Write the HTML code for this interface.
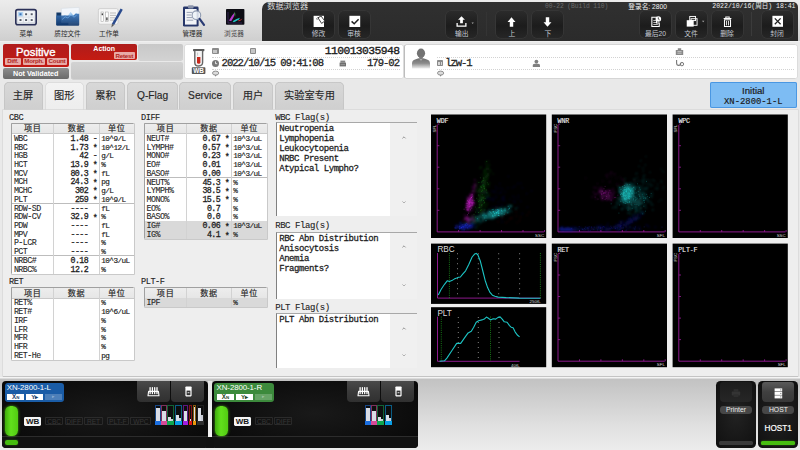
<!DOCTYPE html>
<html lang="zh"><head><meta charset="utf-8"><title>数据浏览器</title>
<style>
html,body{margin:0;padding:0;width:800px;height:450px;overflow:hidden}
body{width:800px;height:450px;overflow:hidden;position:relative;background:#e9e9e9;font-family:"Liberation Sans","Noto Sans CJK SC",sans-serif;color:#222}
#root{position:absolute;left:0;top:0;width:800px;height:450px;overflow:hidden;background:#e9e9e9}
#in{position:absolute;left:0;top:0;width:800px;height:450px}
.a{position:absolute;white-space:nowrap}
.m{font-family:"Liberation Mono","Noto Sans CJK SC",monospace}
.c{text-align:center}
.r{text-align:right}
.tb{position:absolute;top:-12px;height:53.5px;left:-12px;width:824px;background:linear-gradient(#ececec,#ececec 12px,#e2e2e2 28px,#cecece)}
.tl{position:absolute;top:30px;height:8px;line-height:8px;font-size:6.6px;color:#2a2a2a;text-align:center;width:40px}
.dk{position:absolute;left:262px;top:1.5px;width:535.9px;height:39.6px;background:linear-gradient(#303030,#2b2b2b);border-radius:7px 5px 0 0}
.db{position:absolute;top:10.5px;width:31px;height:27.4px;border-radius:5px;background:linear-gradient(#2b2b2b,#1c1c1c 55%,#262626);box-shadow:0 0 0 0.6px #3c3c3c}
.db span{position:absolute;left:-5px;right:-5px;top:19.2px;height:8px;line-height:8px;font-size:6.8px;color:#c3c9d2;text-align:center}
.db svg{position:absolute;left:0;top:0}
.wp{position:absolute;top:44.5px;height:33.6px;background:#fff;border-radius:1.5px;box-shadow:0 0 0 0.6px #d4d4d4}
.dot{position:absolute;height:0;border-top:1px dotted #d2d2d2}
.tab{position:absolute;top:82.3px;height:27.5px;border-radius:5px 5px 0 0;background:linear-gradient(#d8d8d8,#cfcfcf);box-shadow:inset 0 0 0 0.7px #c2c2c2;font-size:10.2px;line-height:28.6px;text-align:center;color:#262626;-webkit-text-stroke:0.15px #262626}
.tab.on{background:linear-gradient(#f3f3f3,#ededed);box-shadow:inset 0 0 0 0.7px #d6d6d6;height:28.5px}
.th{font-size:8.1px;color:#2a2a2a;letter-spacing:0.7px;-webkit-text-stroke:0.2px #2a2a2a}
.tn{font-size:8.3px;letter-spacing:-0.5px;color:#262626;-webkit-text-stroke:0.1px #262626}
.td{font-size:8.3px;letter-spacing:-0.5px;color:#1c1c1c;-webkit-text-stroke:0.28px #1c1c1c;white-space:pre}
.tu{font-size:7.7px;letter-spacing:-0.55px;color:#1c1c1c;-webkit-text-stroke:0.16px #1c1c1c}
.lb{font-size:8.6px;letter-spacing:-0.45px;color:#222;-webkit-text-stroke:0.12px #222}
.fl{font-size:9px;letter-spacing:-0.44px;color:#222;-webkit-text-stroke:0.1px #222}
.fi{font-size:9px;letter-spacing:-0.45px;color:#1c1c1c;-webkit-text-stroke:0.26px #1c1c1c}
.as{position:relative;top:1.4px}
</style></head><body><div id="root"><div id="in">

<div class="tb"></div>
<div class="a" style="left:0;top:41.3px;width:800px;height:1px;background:#efefef"></div>
<svg class="a" style="left:13px;top:5px" width="26" height="24" viewBox="0 0 26 24">
<defs><linearGradient id="mg" x1="0" y1="0" x2="0" y2="1"><stop offset="0" stop-color="#eef1f5"/><stop offset="1" stop-color="#cfd4dc"/></linearGradient>
<linearGradient id="fg" x1="0" y1="0" x2="0" y2="1"><stop offset="0" stop-color="#3a74b8"/><stop offset="1" stop-color="#0e3468"/></linearGradient></defs>
<rect x="2.8" y="4.6" width="20.4" height="15.2" rx="2" fill="url(#mg)" stroke="#2b3158" stroke-width="1.6"/>
<rect x="5.2" y="7" width="4.6" height="4.4" fill="#a9d0f2"/><rect x="10.8" y="7" width="4.6" height="4.4" fill="#f4f6f8"/><rect x="16.4" y="7" width="4.6" height="4.4" fill="#f4f6f8"/>
<rect x="5.2" y="12.8" width="4.6" height="4.4" fill="#f4f6f8"/><rect x="10.8" y="12.8" width="4.6" height="4.4" fill="#f4f6f8"/><rect x="16.4" y="12.8" width="4.6" height="4.4" fill="#f4f6f8"/>
<rect x="6.5" y="8.3" width="2" height="1.9" fill="#3b6fb4"/><rect x="12.1" y="8.3" width="2" height="1.9" fill="#555b68"/><rect x="17.7" y="8.3" width="2" height="1.9" fill="#555b68"/>
<rect x="6.5" y="14.1" width="2" height="1.9" fill="#555b68"/><rect x="12.1" y="14.1" width="2" height="1.9" fill="#555b68"/><rect x="17.7" y="14.1" width="2" height="1.9" fill="#555b68"/>
</svg>
<div class="tl" style="left:6px">菜单</div>
<svg class="a" style="left:54px;top:5px" width="28" height="24" viewBox="0 0 28 24">
<path d="M2.4 7.4h5.6l1.4 1.6h5v11h-12z" fill="#123866"/>
<path d="M7.4 3.4l17.8-1v15h-17.8z" fill="#f2f6fb" stroke="#d3dae3" stroke-width="0.5"/>
<path d="M7.6 12.6l3.2-2.6 2.6 1.2 3.2-4.2 3 3.2 2.6-2.4 2.8 2.6v6.6h-17.4z" fill="#8fc0ec" opacity="0.75"/>
<path d="M2.2 10.6h17.6l1.8-1.8h3.6v11q0 1-1 1h-21q-1 0-1-1z" fill="url(#fg)" opacity="0.9"/>
<path d="M8 14.6l3.2-2.8 2.6 1.2 3.2-3.4 3 2.6 2.6-2" fill="none" stroke="#6fa8e2" stroke-width="0.9" opacity="0.85"/>
</svg>
<div class="tl" style="left:47.5px">质控文件</div>
<svg class="a" style="left:96px;top:5px" width="30" height="26" viewBox="0 0 30 26">
<rect x="2.4" y="3.6" width="19.6" height="15.6" rx="1.6" fill="#f6f6f6" stroke="#c9c9c9" stroke-width="0.8"/>
<rect x="5" y="7" width="2.6" height="9.6" fill="#fff" stroke="#9a9a9a" stroke-width="0.5"/><rect x="5.6" y="8.4" width="1.4" height="1.8" fill="#444"/>
<rect x="9.6" y="7" width="2.6" height="9.6" fill="#fff" stroke="#9a9a9a" stroke-width="0.5"/><rect x="10.2" y="12.4" width="1.4" height="3" fill="#444"/>
<path d="M14 8h6M14 10.4h6M14 12.8h5M14 15.2h4" stroke="#b5b5b5" stroke-width="0.9"/>
<path d="M24.6 3.4l2.2 1.3-8.7 15.3-2.2-1.3z" fill="#2a4b8e"/><path d="M15.9 18.7l2.2 1.3-2.7 2.4z" fill="#5a5a5a"/>
</svg>
<div class="tl" style="left:89px">工作单</div>
<svg class="a" style="left:180px;top:3px" width="28" height="28" viewBox="0 0 28 28">
<rect x="3" y="3.6" width="15.6" height="20" rx="1.4" fill="#27376a"/>
<rect x="5" y="6" width="11.6" height="15.6" fill="#f2f4f7"/>
<rect x="8" y="2.2" width="5.6" height="3.2" rx="0.8" fill="#8a93aa"/>
<path d="M6.6 9.4h6M6.6 12h4.6M6.6 14.6h5.6M6.6 17.2h6.6" stroke="#9aa3b4" stroke-width="1"/>
<circle cx="16.4" cy="12.2" r="4.3" fill="#eef3f8" fill-opacity="0.85" stroke="#8f9bb0" stroke-width="1.1"/>
<path d="M19.6 15.8l4.4 6" stroke="#2a3c74" stroke-width="2.2" stroke-linecap="round"/>
</svg>
<div class="tl" style="left:172.4px">管理器</div>
<svg class="a" style="left:224px;top:7px" width="22" height="20" viewBox="0 0 22 20">
<rect x="2" y="2" width="18.4" height="15.8" rx="0.8" fill="#0d0d14"/>
<path d="M5 13.6q3-5.6 5.6-8.2q.6 2.6-3.4 8.8z" fill="#c23ad6" opacity="0.95"/>
<path d="M8.6 14.2q4-2.8 7.4-3.4q-1.6 3-6.2 4.4z" fill="#22c7c7"/>
<path d="M10.6 4.6q1.2 2 .4 5.4q-1-2.4-.4-5.4z" fill="#38b838"/>
<path d="M14 13.6q2.4-.6 4.4-2.2q-.8 2.2-3.6 3z" fill="#d23a3a" opacity="0.9"/>
<path d="M4 5v11h14" stroke="#5a3a8a" stroke-width="0.5" fill="none"/>
</svg>
<div class="tl" style="left:214px;color:#444">浏览器</div>
<div class="dk"></div>
<div class="a" style="left:267.2px;top:2px;height:9px;line-height:9px;font-size:8.2px;color:#dadada;letter-spacing:0">数据浏览器</div>
<div class="a m" style="left:545px;top:2.9px;height:8px;line-height:8px;font-size:6.3px;color:#6a6a6a;letter-spacing:-0.06px">00-22 (Build 110)</div>
<div class="a" style="left:628.3px;top:2.7px;height:8px;line-height:8px;font-size:6.7px;color:#f2f2f2">登录名: 2800</div>
<div class="a m" style="left:712.3px;top:2.9px;height:8px;line-height:8px;font-size:6.5px;color:#ececec;letter-spacing:0px">2022/10/16(周日) 18:41</div>
<div class="db" style="left:303.1px"><svg width="31" height="20" viewBox="0 0 31 20"><g transform="translate(0 0.2)"><rect x="10.6" y="4.6" width="10.4" height="11.2" fill="#fff"/><path d="M15 6.6l3-1.8 3.8 5-3.2 2.4z" fill="#fff" stroke="#2a2a2a" stroke-width="0.9"/><path d="M14.2 8.6q-1-1.6.6-2.4" fill="none" stroke="#2a2a2a" stroke-width="0.7"/></g></svg><span>修改</span></div>
<div class="db" style="left:338.6px"><svg width="31" height="20" viewBox="0 0 31 20"><g transform="translate(0 0.2)"><rect x="10.4" y="4.6" width="10.8" height="11.2" fill="#fff"/><path d="M12.6 10.2l2.6 2.4 4.4-4.6" fill="none" stroke="#222" stroke-width="1.5"/></g></svg><span>审核</span></div>
<div class="db" style="left:446.3px"><svg width="31" height="20" viewBox="0 0 31 20"><g transform="translate(15.5 15.7) scale(0.86) translate(-15.5 -15.8)"><path d="M15.5 3.6l4 4.2h-2.4v4h-3.2v-4h-2.4z" fill="#fff"/><path d="M10.4 11.4v3.8h10.2v-3.8" fill="none" stroke="#fff" stroke-width="1.5"/><path d="M27.2 11h2.6l-1.3 1.7z" fill="#aaa"/></g></svg><span>输出</span></div>
<div class="db" style="left:496.4px"><svg width="31" height="20" viewBox="0 0 31 20"><g transform="translate(15.5 15.8) scale(0.86) translate(-15.5 -14.8)"><path d="M15.5 3.8l4.6 5.4h-2.6v5.6h-4v-5.6h-2.6z" fill="#fff"/></g></svg><span>上</span></div>
<div class="db" style="left:532.3px"><svg width="31" height="20" viewBox="0 0 31 20"><g transform="translate(15.5 15.8) scale(0.86) translate(-15.5 -15.6)"><path d="M15.5 15.6l4.6-5.4h-2.6v-5.8h-4v5.8h-2.6z" fill="#fff"/></g></svg><span>下</span></div>
<div class="db" style="left:640px"><svg width="31" height="20" viewBox="0 0 31 20"><g transform="translate(16 15.5) scale(0.9) translate(-16 -15.6)"><path d="M11.4 5.4h5.2v6.4h3v3.8h-8.2z" fill="none" stroke="#fff" stroke-width="1.2"/><path d="M13 9h3M13 11.2h3M13 13.4h5" stroke="#fff" stroke-width="0.8"/><circle cx="18.6" cy="7.2" r="3.1" fill="#fff"/><path d="M18.6 5.4v2l1.4.8" stroke="#222" stroke-width="0.8" fill="none"/></g></svg><span>最后20</span></div>
<div class="db" style="left:675.6px"><svg width="31" height="20" viewBox="0 0 31 20"><g transform="translate(15.9 15.6) scale(0.94) translate(-15.9 -14.8)"><rect x="13.6" y="4" width="6.2" height="4.4" fill="none" stroke="#fff" stroke-width="1"/><rect x="10.4" y="8" width="7.4" height="6.8" fill="#fff"/><rect x="15" y="6.4" width="6.4" height="7" fill="none" stroke="#fff" stroke-width="1"/><path d="M26.6 8.6h2.6l-1.3 1.7z" fill="#aaa"/></g></svg><span>文件</span></div>
<div class="db" style="left:711.6px"><svg width="31" height="20" viewBox="0 0 31 20"><g transform="translate(15.5 15.4) scale(0.84) translate(-15.6 -15.6)"><path d="M11 6.2h9.2M13.6 6v-1.6h4v1.6" stroke="#fff" stroke-width="1.2" fill="none"/><path d="M12 7.6h7.2v8h-7.2z" fill="none" stroke="#fff" stroke-width="1.2"/><path d="M14.4 9v5.4M16.8 9v5.4" stroke="#fff" stroke-width="1"/></g></svg><span>删除</span></div>
<div class="db" style="left:761.6px"><svg width="31" height="20" viewBox="0 0 31 20"><g transform="translate(0 0.2)"><rect x="10.4" y="4.6" width="10.6" height="11" fill="#fff"/><path d="M12.8 7.2l5.8 5.8M18.6 7.2l-5.8 5.8" stroke="#222" stroke-width="1.3"/></g></svg><span>封闭</span></div>
<div class="a" style="left:751.4px;top:12px;width:0.8px;height:24px;background:#3b3b3b"></div>
<div class="a" style="left:486.4px;top:12px;width:0.8px;height:24px;background:#343434"></div>
<div class="a" style="left:2.5px;top:44px;width:66.5px;height:23.2px;border-radius:2px;background:linear-gradient(#b01c1c,#c21a14)"></div>
<div class="a c" style="left:2.5px;top:45px;width:66.5px;height:12px;line-height:12px;font-size:11.3px;color:#fff;transform:translateY(0.5px);-webkit-text-stroke:0.4px #fff">Positive</div>
<div class="a c" style="left:5px;top:58.3px;width:15.6px;height:6.4px;line-height:6.8px;font-size:6.2px;font-weight:bold;letter-spacing:-0.2px;border-radius:1px;background:#e8aaa6;color:#b02420">Diff.</div>
<div class="a c" style="left:23px;top:58.3px;width:21.8px;height:6.4px;line-height:6.8px;font-size:6.2px;font-weight:bold;letter-spacing:-0.2px;border-radius:1px;background:#e8aaa6;color:#b02420">Morph.</div>
<div class="a c" style="left:47px;top:58.3px;width:20px;height:6.4px;line-height:6.8px;font-size:6.2px;font-weight:bold;letter-spacing:-0.2px;border-radius:1px;background:#e8aaa6;color:#b02420">Count</div>
<div class="a c" style="left:2.5px;top:68.4px;width:66.5px;height:10.3px;line-height:12.2px;border-radius:2px;background:linear-gradient(#8d8d8d,#6a6a6a);font-size:7.2px;font-weight:bold;color:#fff">Not Validated</div>
<div class="a" style="left:71.3px;top:44px;width:65.3px;height:16.3px;border-radius:2px;background:linear-gradient(#ae1d1b,#c51b12)"></div>
<div class="a c" style="left:71.3px;top:45px;width:65.9px;height:8px;line-height:8px;font-size:7px;font-weight:bold;color:#fff">Action</div>
<div class="a c" style="left:113.6px;top:52.2px;width:21.4px;height:6.6px;line-height:7px;font-size:6.2px;font-weight:bold;letter-spacing:-0.2px;border-radius:1px;background:#e8aaa6;color:#b02420">Retest</div>
<div class="a" style="left:138.2px;top:44.2px;width:44.4px;height:16px;border-radius:2px;background:linear-gradient(#c8c8c8,#d2d2d2);box-shadow:0 0.6px 0 #bcbcbc"></div>
<div class="a" style="left:71.3px;top:61.8px;width:111.3px;height:16.8px;border-radius:2px;background:linear-gradient(#d2d2d2,#c6c6c6);box-shadow:0 0.6px 0 #bcbcbc"></div>
<div class="wp" style="left:185.2px;width:217.8px"></div>
<div class="wp" style="left:405.2px;width:392px;box-shadow:-0.8px 0 0 0.2px #bdbdbd,0 0 0 0.6px #d4d4d4"></div>
<svg class="a" style="left:190px;top:47px" width="18" height="29" viewBox="0 0 18 29">
<rect x="3" y="2" width="11.4" height="2.2" rx="0.6" fill="#5c5c5c"/>
<path d="M4.8 4v11.4q0 3.6 3.9 3.6t3.9-3.6v-11.4" fill="#f4f4f4" stroke="#666" stroke-width="1.4"/>
<path d="M7 10h3.4v5.2q0 1.6-1.7 1.6t-1.7-1.6z" fill="#c8281c"/>
<path d="M7.6 5.6v3" stroke="#aaa" stroke-width="0.6"/>
<rect x="1.8" y="20.2" width="13.6" height="6.8" rx="0.8" fill="#585858"/>
<text x="8.6" y="25.9" font-family="Liberation Sans,sans-serif" font-weight="bold" font-size="6.4" fill="#fff" text-anchor="middle">WB</text>
</svg>
<div class="a" style="left:212px;top:48px;width:6.8px;height:6.4px;border-radius:1px;background:#8b8b8b"></div><div class="a" style="left:213.3px;top:49.6px;width:4.2px;height:3px;background:#d9d9d9;opacity:.75"></div>
<div class="a" style="left:249.5px;top:48px;width:6.8px;height:6.4px;border-radius:1px;background:#8b8b8b"></div><div class="a" style="left:250.8px;top:49.4px;width:4.2px;height:3.4px;background:#d9d9d9;opacity:.75"></div>
<div class="dot" style="left:212px;top:56.8px;width:188px"></div>
<div class="dot" style="left:212px;top:68.6px;width:188px"></div>
<svg class="a" style="left:211px;top:58.6px" width="9" height="9" viewBox="0 0 9 9"><circle cx="4.5" cy="4.5" r="3.5" fill="#777"/><path d="M4.5 2.4v2.3h1.7" stroke="#fff" stroke-width="0.8" fill="none"/></svg>
<svg class="a" style="left:211px;top:70.4px" width="9" height="8" viewBox="0 0 9 8"><path d="M3.4 4.6l1.2 2.2 1.2-2.2z" fill="#858585"/><ellipse cx="4.6" cy="3.1" rx="3.1" ry="2" fill="#dcdcdc" stroke="#858585" stroke-width="0.9"/></svg>
<div class="a m" style="left:221.6px;top:57.6px;height:11px;line-height:11px;font-size:10.6px;letter-spacing:-1.02px;color:#262626;-webkit-text-stroke:0.3px #262626">2022/10/15 09:41:08</div>
<div class="a m r" style="left:300px;width:99.4px;top:44.6px;height:12px;line-height:12px;font-size:11.4px;letter-spacing:-0.62px;color:#1e1e1e;-webkit-text-stroke:0.36px #1e1e1e">110013035948</div>
<div class="a m r" style="left:340px;width:59px;top:57.6px;height:11px;line-height:11px;font-size:10.6px;letter-spacing:-1.02px;color:#262626;-webkit-text-stroke:0.3px #262626">179-02</div>
<svg class="a" style="left:339.4px;top:60px" width="8" height="7" viewBox="0 0 8 7"><rect x="0.6" y="2.6" width="6.4" height="3.8" fill="#707070"/><rect x="1.4" y="0.6" width="4.8" height="2.2" fill="#858585"/><path d="M1.6 4.6h4.4" stroke="#bbb" stroke-width="0.5"/></svg>
<svg class="a" style="left:410px;top:46.6px" width="22" height="24" viewBox="0 0 22 24">
<defs><linearGradient id="pg" x1="0" y1="0" x2="0" y2="1"><stop offset="0" stop-color="#707070"/><stop offset="0.5" stop-color="#8c8c8c"/><stop offset="1" stop-color="#ececec"/></linearGradient></defs>
<ellipse cx="11" cy="6.2" rx="4.1" ry="4.7" fill="#727272"/>
<rect x="9.2" y="9.6" width="3.6" height="3" fill="#7a7a7a"/>
<path d="M2 21.4v-5q0-3.4 4.4-4.4l2.4-.8 2.2 2.4 2.2-2.4 2.4.8q4.4 1 4.4 4.4v5z" fill="url(#pg)"/>
</svg>
<div class="dot" style="left:437px;top:56.8px;width:357px"></div>
<div class="dot" style="left:437px;top:68.6px;width:357px"></div>
<div class="a" style="left:436.8px;top:59.9px;width:6.6px;height:6.6px;border-radius:0.8px;background:#8a8a8a"></div><div class="a" style="left:438.4px;top:61.5px;width:3.4px;height:3.4px;background:#d6d6d6"></div><div class="a" style="left:439.6px;top:61.5px;width:1px;height:3.4px;background:#8a8a8a"></div>
<div class="a m" style="left:445.3px;top:57.6px;height:11px;line-height:11px;font-size:10.6px;letter-spacing:-1.1px;color:#262626;-webkit-text-stroke:0.3px #262626">lzw-1</div>
<svg class="a" style="left:436px;top:70.4px" width="9" height="8" viewBox="0 0 9 8"><path d="M3.4 4.6l1.2 2.2 1.2-2.2z" fill="#858585"/><ellipse cx="4.6" cy="3.1" rx="3.1" ry="2" fill="#dcdcdc" stroke="#858585" stroke-width="0.9"/></svg>
<svg class="a" style="left:532px;top:59.4px" width="9" height="9" viewBox="0 0 9 9"><circle cx="4.4" cy="2.6" r="1.9" fill="#808080"/><path d="M0.8 8v-1.6q0-1.8 3.6-1.8t3.6 1.8v1.6z" fill="#808080"/></svg>
<svg class="a" style="left:675px;top:47.4px" width="9" height="9" viewBox="0 0 9 9"><path d="M0.8 8v-5h2v-1.8h3.4v1.8h2v5z" fill="#888"/><path d="M2.4 4.6h4.2M2.4 6.2h4.2" stroke="#ddd" stroke-width="0.7"/></svg>
<svg class="a" style="left:675px;top:59px" width="10" height="9" viewBox="0 0 10 9"><path d="M1.6 1v3q0 2.4 2.1 2.4t2.1-2.4" fill="none" stroke="#777" stroke-width="1.1"/><circle cx="6.9" cy="5.1" r="1.7" fill="none" stroke="#777" stroke-width="1"/></svg>
<div class="tab" style="left:3.5px;width:39px">主屏</div>
<div class="tab on" style="left:45px;width:38.6px">图形</div>
<div class="tab" style="left:86px;width:39px">累积</div>
<div class="tab" style="left:127.4px;width:50.4px">Q-Flag</div>
<div class="tab" style="left:179.2px;width:51.8px">Service</div>
<div class="tab" style="left:233px;width:39.8px">用户</div>
<div class="tab" style="left:274.6px;width:69.8px">实验室专用</div>
<div class="a" style="left:709.8px;top:82px;width:87px;height:25.8px;border-radius:2px;background:#7dbcf3;box-shadow:inset 0 0 0 1px #4a97e2"></div>
<div class="a c" style="left:709.8px;top:84.6px;width:87px;height:12px;line-height:12px;font-size:9.6px;color:#1a1a1a;-webkit-text-stroke:0.2px #1a1a1a">Initial</div>
<div class="a c m" style="left:709.8px;top:96.9px;width:87px;height:11px;line-height:11px;font-size:8.9px;color:#1a1a1a;-webkit-text-stroke:0.15px #1a1a1a">XN-2800-1-L</div>
<div class="a" style="left:2.6px;top:109.6px;width:795px;height:266.4px;background:#eeeeee;box-shadow:0 0 0 0.7px #d6d6d6"></div>
<div class="a" style="left:2.6px;top:376px;width:795px;height:0.8px;background:#c4c4c4"></div>
<div class="a m lb" style="left:9px;top:112.5px;height:11px;line-height:11px">CBC</div>
<div class="a m lb" style="left:141px;top:112.5px;height:11px;line-height:11px">DIFF</div>
<div class="a m lb" style="left:9px;top:276.7px;height:11px;line-height:11px">RET</div>
<div class="a m lb" style="left:141px;top:276.7px;height:11px;line-height:11px">PLT-F</div>
<div class="a" style="left:12.1px;top:123.6px;width:122.0px;height:150.00000000000003px;background:#fff;box-shadow:-0.8px -0.8px 0 0 #969696,0 0 0 0.7px #b9b9b9;overflow:hidden">
<div class="a" style="left:0;top:0;width:122.0px;height:9.700000000000017px;background:linear-gradient(#ededed,#e6e6e6);border-bottom:0.7px solid #c9c9c9"></div>
<div class="a c th" style="left:0px;width:41.3px;top:0.9px;height:9.700000000000017px;line-height:9.700000000000017px">项目</div>
<div class="a c th" style="left:41.3px;width:46.10000000000001px;top:0.9px;height:9.700000000000017px;line-height:9.700000000000017px">数据</div>
<div class="a c th" style="left:87.4px;width:34.599999999999994px;top:0.9px;height:9.700000000000017px;line-height:9.700000000000017px">单位</div>
<div class="a m tn" style="left:1.8px;top:11.45px;height:8.67px;line-height:8.67px">WBC</div>
<div class="a m td r" style="left:41.3px;width:43.9px;top:11.45px;height:8.67px;line-height:8.67px">1.48 -</div>
<div class="a m tu" style="left:89.1px;top:11.45px;height:8.67px;line-height:8.67px">10^9/L</div>
<div class="a m tn" style="left:1.8px;top:20.12px;height:8.67px;line-height:8.67px">RBC</div>
<div class="a m td r" style="left:41.3px;width:43.9px;top:20.12px;height:8.67px;line-height:8.67px">1.73 <span class="as">*</span></div>
<div class="a m tu" style="left:89.1px;top:20.12px;height:8.67px;line-height:8.67px">10^12/L</div>
<div class="a m tn" style="left:1.8px;top:28.79px;height:8.67px;line-height:8.67px">HGB</div>
<div class="a m td r" style="left:41.3px;width:43.9px;top:28.79px;height:8.67px;line-height:8.67px">42 -</div>
<div class="a m tu" style="left:89.1px;top:28.79px;height:8.67px;line-height:8.67px">g/L</div>
<div class="a m tn" style="left:1.8px;top:37.46px;height:8.67px;line-height:8.67px">HCT</div>
<div class="a m td r" style="left:41.3px;width:43.9px;top:37.46px;height:8.67px;line-height:8.67px">13.9 <span class="as">*</span></div>
<div class="a m tu" style="left:89.1px;top:37.46px;height:8.67px;line-height:8.67px">%</div>
<div class="a m tn" style="left:1.8px;top:46.13px;height:8.67px;line-height:8.67px">MCV</div>
<div class="a m td r" style="left:41.3px;width:43.9px;top:46.13px;height:8.67px;line-height:8.67px">80.3 <span class="as">*</span></div>
<div class="a m tu" style="left:89.1px;top:46.13px;height:8.67px;line-height:8.67px">fL</div>
<div class="a m tn" style="left:1.8px;top:54.80px;height:8.67px;line-height:8.67px">MCH</div>
<div class="a m td r" style="left:41.3px;width:43.9px;top:54.80px;height:8.67px;line-height:8.67px">24.3 <span class="as">*</span></div>
<div class="a m tu" style="left:89.1px;top:54.80px;height:8.67px;line-height:8.67px">pg</div>
<div class="a m tn" style="left:1.8px;top:63.47px;height:8.67px;line-height:8.67px">MCHC</div>
<div class="a m td r" style="left:41.3px;width:43.9px;top:63.47px;height:8.67px;line-height:8.67px">302 <span class="as">*</span></div>
<div class="a m tu" style="left:89.1px;top:63.47px;height:8.67px;line-height:8.67px">g/L</div>
<div class="a m tn" style="left:1.8px;top:72.14px;height:8.67px;line-height:8.67px">PLT</div>
<div class="a m td r" style="left:41.3px;width:43.9px;top:72.14px;height:8.67px;line-height:8.67px">259 <span class="as">*</span></div>
<div class="a m tu" style="left:89.1px;top:72.14px;height:8.67px;line-height:8.67px">10^9/L</div>
<div class="a" style="left:0;top:79.41px;width:122.0px;height:0.8px;background:#bdbdbd"></div>
<div class="a m tn" style="left:1.8px;top:81.16px;height:8.67px;line-height:8.67px">RDW-SD</div>
<div class="a m td r" style="left:41.3px;width:43.9px;top:81.16px;height:8.67px;line-height:8.67px">----  </div>
<div class="a m tu" style="left:89.1px;top:81.16px;height:8.67px;line-height:8.67px">fL</div>
<div class="a m tn" style="left:1.8px;top:89.83px;height:8.67px;line-height:8.67px">RDW-CV</div>
<div class="a m td r" style="left:41.3px;width:43.9px;top:89.83px;height:8.67px;line-height:8.67px">32.9 <span class="as">*</span></div>
<div class="a m tu" style="left:89.1px;top:89.83px;height:8.67px;line-height:8.67px">%</div>
<div class="a m tn" style="left:1.8px;top:98.50px;height:8.67px;line-height:8.67px">PDW</div>
<div class="a m td r" style="left:41.3px;width:43.9px;top:98.50px;height:8.67px;line-height:8.67px">----  </div>
<div class="a m tu" style="left:89.1px;top:98.50px;height:8.67px;line-height:8.67px">fL</div>
<div class="a m tn" style="left:1.8px;top:107.17px;height:8.67px;line-height:8.67px">MPV</div>
<div class="a m td r" style="left:41.3px;width:43.9px;top:107.17px;height:8.67px;line-height:8.67px">----  </div>
<div class="a m tu" style="left:89.1px;top:107.17px;height:8.67px;line-height:8.67px">fL</div>
<div class="a m tn" style="left:1.8px;top:115.84px;height:8.67px;line-height:8.67px">P-LCR</div>
<div class="a m td r" style="left:41.3px;width:43.9px;top:115.84px;height:8.67px;line-height:8.67px">----  </div>
<div class="a m tu" style="left:89.1px;top:115.84px;height:8.67px;line-height:8.67px">%</div>
<div class="a m tn" style="left:1.8px;top:124.51px;height:8.67px;line-height:8.67px">PCT</div>
<div class="a m td r" style="left:41.3px;width:43.9px;top:124.51px;height:8.67px;line-height:8.67px">----  </div>
<div class="a m tu" style="left:89.1px;top:124.51px;height:8.67px;line-height:8.67px">%</div>
<div class="a" style="left:0;top:131.78px;width:122.0px;height:0.8px;background:#bdbdbd"></div>
<div class="a m tn" style="left:1.8px;top:133.53px;height:8.67px;line-height:8.67px">NRBC#</div>
<div class="a m td r" style="left:41.3px;width:43.9px;top:133.53px;height:8.67px;line-height:8.67px">0.18  </div>
<div class="a m tu" style="left:89.1px;top:133.53px;height:8.67px;line-height:8.67px">10^3/uL</div>
<div class="a m tn" style="left:1.8px;top:142.20px;height:8.67px;line-height:8.67px">NRBC%</div>
<div class="a m td r" style="left:41.3px;width:43.9px;top:142.20px;height:8.67px;line-height:8.67px">12.2  </div>
<div class="a m tu" style="left:89.1px;top:142.20px;height:8.67px;line-height:8.67px">%</div>
<div class="a" style="left:40.9px;top:0;width:0.8px;height:150.00000000000003px;background:#d2d2d2"></div>
<div class="a" style="left:87.0px;top:0;width:0.8px;height:150.00000000000003px;background:#d2d2d2"></div>
</div>
<div class="a" style="left:144.8px;top:123.6px;width:122.19999999999999px;height:115.0px;background:#fff;box-shadow:-0.8px -0.8px 0 0 #969696,0 0 0 0.7px #b9b9b9;overflow:hidden">
<div class="a" style="left:0;top:0;width:122.19999999999999px;height:9.700000000000017px;background:linear-gradient(#ededed,#e6e6e6);border-bottom:0.7px solid #c9c9c9"></div>
<div class="a c th" style="left:0px;width:41.69999999999999px;top:0.9px;height:9.700000000000017px;line-height:9.700000000000017px">项目</div>
<div class="a c th" style="left:41.69999999999999px;width:45.0px;top:0.9px;height:9.700000000000017px;line-height:9.700000000000017px">数据</div>
<div class="a c th" style="left:86.69999999999999px;width:35.5px;top:0.9px;height:9.700000000000017px;line-height:9.700000000000017px">单位</div>
<div class="a m tn" style="left:1.8px;top:11.45px;height:8.67px;line-height:8.67px">NEUT#</div>
<div class="a m td r" style="left:41.69999999999999px;width:42.8px;top:11.45px;height:8.67px;line-height:8.67px">0.67 <span class="as">*</span></div>
<div class="a m tu" style="left:88.4px;top:11.45px;height:8.67px;line-height:8.67px">10^3/uL</div>
<div class="a m tn" style="left:1.8px;top:20.12px;height:8.67px;line-height:8.67px">LYMPH#</div>
<div class="a m td r" style="left:41.69999999999999px;width:42.8px;top:20.12px;height:8.67px;line-height:8.67px">0.57 <span class="as">*</span></div>
<div class="a m tu" style="left:88.4px;top:20.12px;height:8.67px;line-height:8.67px">10^3/uL</div>
<div class="a m tn" style="left:1.8px;top:28.79px;height:8.67px;line-height:8.67px">MONO#</div>
<div class="a m td r" style="left:41.69999999999999px;width:42.8px;top:28.79px;height:8.67px;line-height:8.67px">0.23 <span class="as">*</span></div>
<div class="a m tu" style="left:88.4px;top:28.79px;height:8.67px;line-height:8.67px">10^3/uL</div>
<div class="a m tn" style="left:1.8px;top:37.46px;height:8.67px;line-height:8.67px">EO#</div>
<div class="a m td r" style="left:41.69999999999999px;width:42.8px;top:37.46px;height:8.67px;line-height:8.67px">0.01  </div>
<div class="a m tu" style="left:88.4px;top:37.46px;height:8.67px;line-height:8.67px">10^3/uL</div>
<div class="a m tn" style="left:1.8px;top:46.13px;height:8.67px;line-height:8.67px">BASO#</div>
<div class="a m td r" style="left:41.69999999999999px;width:42.8px;top:46.13px;height:8.67px;line-height:8.67px">0.00  </div>
<div class="a m tu" style="left:88.4px;top:46.13px;height:8.67px;line-height:8.67px">10^3/uL</div>
<div class="a" style="left:0;top:53.40px;width:122.19999999999999px;height:0.8px;background:#bdbdbd"></div>
<div class="a m tn" style="left:1.8px;top:55.15px;height:8.67px;line-height:8.67px">NEUT%</div>
<div class="a m td r" style="left:41.69999999999999px;width:42.8px;top:55.15px;height:8.67px;line-height:8.67px">45.3 <span class="as">*</span></div>
<div class="a m tu" style="left:88.4px;top:55.15px;height:8.67px;line-height:8.67px">%</div>
<div class="a m tn" style="left:1.8px;top:63.82px;height:8.67px;line-height:8.67px">LYMPH%</div>
<div class="a m td r" style="left:41.69999999999999px;width:42.8px;top:63.82px;height:8.67px;line-height:8.67px">38.5 <span class="as">*</span></div>
<div class="a m tu" style="left:88.4px;top:63.82px;height:8.67px;line-height:8.67px">%</div>
<div class="a m tn" style="left:1.8px;top:72.49px;height:8.67px;line-height:8.67px">MONO%</div>
<div class="a m td r" style="left:41.69999999999999px;width:42.8px;top:72.49px;height:8.67px;line-height:8.67px">15.5 <span class="as">*</span></div>
<div class="a m tu" style="left:88.4px;top:72.49px;height:8.67px;line-height:8.67px">%</div>
<div class="a m tn" style="left:1.8px;top:81.16px;height:8.67px;line-height:8.67px">EO%</div>
<div class="a m td r" style="left:41.69999999999999px;width:42.8px;top:81.16px;height:8.67px;line-height:8.67px">0.7  </div>
<div class="a m tu" style="left:88.4px;top:81.16px;height:8.67px;line-height:8.67px">%</div>
<div class="a m tn" style="left:1.8px;top:89.83px;height:8.67px;line-height:8.67px">BASO%</div>
<div class="a m td r" style="left:41.69999999999999px;width:42.8px;top:89.83px;height:8.67px;line-height:8.67px">0.0  </div>
<div class="a m tu" style="left:88.4px;top:89.83px;height:8.67px;line-height:8.67px">%</div>
<div class="a" style="left:0;top:97.10px;width:122.19999999999999px;height:0.8px;background:#bdbdbd"></div>
<div class="a" style="left:0;top:97.55px;width:122.19999999999999px;height:9.07px;background:#d9d9d9"></div>
<div class="a m tn" style="left:1.8px;top:98.85px;height:8.67px;line-height:8.67px">IG#</div>
<div class="a m td r" style="left:41.69999999999999px;width:42.8px;top:98.85px;height:8.67px;line-height:8.67px">0.06 <span class="as">*</span></div>
<div class="a m tu" style="left:88.4px;top:98.85px;height:8.67px;line-height:8.67px">10^3/uL</div>
<div class="a" style="left:0;top:106.22px;width:122.19999999999999px;height:9.07px;background:#d9d9d9"></div>
<div class="a m tn" style="left:1.8px;top:107.52px;height:8.67px;line-height:8.67px">IG%</div>
<div class="a m td r" style="left:41.69999999999999px;width:42.8px;top:107.52px;height:8.67px;line-height:8.67px">4.1 <span class="as">*</span></div>
<div class="a m tu" style="left:88.4px;top:107.52px;height:8.67px;line-height:8.67px">%</div>
<div class="a" style="left:41.3px;top:0;width:0.8px;height:115.0px;background:#d2d2d2"></div>
<div class="a" style="left:86.3px;top:0;width:0.8px;height:115.0px;background:#d2d2d2"></div>
</div>
<div class="a" style="left:12.1px;top:287.8px;width:122.0px;height:72.0px;background:#fff;box-shadow:-0.8px -0.8px 0 0 #969696,0 0 0 0.7px #b9b9b9;overflow:hidden">
<div class="a" style="left:0;top:0;width:122.0px;height:9.899999999999977px;background:linear-gradient(#ededed,#e6e6e6);border-bottom:0.7px solid #c9c9c9"></div>
<div class="a c th" style="left:0px;width:41.3px;top:0.9px;height:9.899999999999977px;line-height:9.899999999999977px">项目</div>
<div class="a c th" style="left:41.3px;width:46.10000000000001px;top:0.9px;height:9.899999999999977px;line-height:9.899999999999977px">数据</div>
<div class="a c th" style="left:87.4px;width:34.599999999999994px;top:0.9px;height:9.899999999999977px;line-height:9.899999999999977px">单位</div>
<div class="a m tn" style="left:1.8px;top:11.65px;height:8.72px;line-height:8.72px">RET%</div>
<div class="a m tu" style="left:89.1px;top:11.65px;height:8.72px;line-height:8.72px">%</div>
<div class="a m tn" style="left:1.8px;top:20.37px;height:8.72px;line-height:8.72px">RET#</div>
<div class="a m tu" style="left:89.1px;top:20.37px;height:8.72px;line-height:8.72px">10^6/uL</div>
<div class="a m tn" style="left:1.8px;top:29.09px;height:8.72px;line-height:8.72px">IRF</div>
<div class="a m tu" style="left:89.1px;top:29.09px;height:8.72px;line-height:8.72px">%</div>
<div class="a m tn" style="left:1.8px;top:37.81px;height:8.72px;line-height:8.72px">LFR</div>
<div class="a m tu" style="left:89.1px;top:37.81px;height:8.72px;line-height:8.72px">%</div>
<div class="a m tn" style="left:1.8px;top:46.53px;height:8.72px;line-height:8.72px">MFR</div>
<div class="a m tu" style="left:89.1px;top:46.53px;height:8.72px;line-height:8.72px">%</div>
<div class="a m tn" style="left:1.8px;top:55.25px;height:8.72px;line-height:8.72px">HFR</div>
<div class="a m tu" style="left:89.1px;top:55.25px;height:8.72px;line-height:8.72px">%</div>
<div class="a m tn" style="left:1.8px;top:63.97px;height:8.72px;line-height:8.72px">RET-He</div>
<div class="a m tu" style="left:89.1px;top:63.97px;height:8.72px;line-height:8.72px">pg</div>
<div class="a" style="left:40.9px;top:0;width:0.8px;height:72.0px;background:#d2d2d2"></div>
<div class="a" style="left:87.0px;top:0;width:0.8px;height:72.0px;background:#d2d2d2"></div>
</div>
<div class="a" style="left:144.8px;top:287.8px;width:122.19999999999999px;height:18.80000000000001px;background:#fff;box-shadow:-0.8px -0.8px 0 0 #969696,0 0 0 0.7px #b9b9b9;overflow:hidden">
<div class="a" style="left:0;top:0;width:122.19999999999999px;height:9.899999999999977px;background:linear-gradient(#ededed,#e6e6e6);border-bottom:0.7px solid #c9c9c9"></div>
<div class="a c th" style="left:0px;width:41.69999999999999px;top:0.9px;height:9.899999999999977px;line-height:9.899999999999977px">项目</div>
<div class="a c th" style="left:41.69999999999999px;width:45.0px;top:0.9px;height:9.899999999999977px;line-height:9.899999999999977px">数据</div>
<div class="a c th" style="left:86.69999999999999px;width:35.5px;top:0.9px;height:9.899999999999977px;line-height:9.899999999999977px">单位</div>
<div class="a" style="left:0;top:10.35px;width:122.19999999999999px;height:9.0px;background:#d9d9d9"></div>
<div class="a m tn" style="left:1.8px;top:11.65px;height:8.6px;line-height:8.6px">IPF</div>
<div class="a m tu" style="left:88.4px;top:11.65px;height:8.6px;line-height:8.6px">%</div>
<div class="a" style="left:41.3px;top:0;width:0.8px;height:18.80000000000001px;background:#d2d2d2"></div>
<div class="a" style="left:86.3px;top:0;width:0.8px;height:18.80000000000001px;background:#d2d2d2"></div>
</div>
<div class="a m fl" style="left:275.2px;top:112.9px;height:11px;line-height:11px">WBC Flag(s)</div>
<div class="a" style="left:276px;top:122.3px;width:141.2px;height:93.5px;background:#f0f0f0;border-top:1px solid #a8a8a8;border-left:1px solid #808080;box-sizing:border-box;overflow:hidden">
<div class="a" style="left:0;top:0;width:113.4px;height:100%;background:#fff"></div>
<div class="a m fi" style="left:2.2px;top:0.80px;height:10px;line-height:10px">Neutropenia</div>
<div class="a m fi" style="left:2.2px;top:10.85px;height:10px;line-height:10px">Lymphopenia</div>
<div class="a m fi" style="left:2.2px;top:20.90px;height:10px;line-height:10px">Leukocytopenia</div>
<div class="a m fi" style="left:2.2px;top:30.95px;height:10px;line-height:10px">NRBC Present</div>
<div class="a m fi" style="left:2.2px;top:41.00px;height:10px;line-height:10px">Atypical Lympho?</div>
<svg class="a" style="left:124px;top:11.3px" width="6" height="5" viewBox="0 0 6 5"><path d="M1.4 3.4l1.6-1.6 1.6 1.6" fill="none" stroke="#8c8c8c" stroke-width="0.9"/></svg>
<svg class="a" style="left:124px;top:76.9px" width="6" height="5" viewBox="0 0 6 5"><path d="M1.4 1.4l1.6 1.6 1.6-1.6" fill="none" stroke="#a9a9a9" stroke-width="0.9"/></svg>
</div>
<div class="a m fl" style="left:275.2px;top:221.4px;height:11px;line-height:11px">RBC Flag(s)</div>
<div class="a" style="left:276px;top:231.8px;width:141.2px;height:67.2px;background:#f0f0f0;border-top:1px solid #a8a8a8;border-left:1px solid #808080;box-sizing:border-box;overflow:hidden">
<div class="a" style="left:0;top:0;width:113.4px;height:100%;background:#fff"></div>
<div class="a m fi" style="left:2.2px;top:0.80px;height:10px;line-height:10px">RBC Abn Distribution</div>
<div class="a m fi" style="left:2.2px;top:10.85px;height:10px;line-height:10px">Anisocytosis</div>
<div class="a m fi" style="left:2.2px;top:20.90px;height:10px;line-height:10px">Anemia</div>
<div class="a m fi" style="left:2.2px;top:30.95px;height:10px;line-height:10px">Fragments?</div>
<svg class="a" style="left:124px;top:11.4px" width="6" height="5" viewBox="0 0 6 5"><path d="M1.4 3.4l1.6-1.6 1.6 1.6" fill="none" stroke="#8c8c8c" stroke-width="0.9"/></svg>
<svg class="a" style="left:124px;top:50.2px" width="6" height="5" viewBox="0 0 6 5"><path d="M1.4 1.4l1.6 1.6 1.6-1.6" fill="none" stroke="#a9a9a9" stroke-width="0.9"/></svg>
</div>
<div class="a m fl" style="left:275.2px;top:303.3px;height:11px;line-height:11px">PLT Flag(s)</div>
<div class="a" style="left:276px;top:312.8px;width:141.2px;height:55.4px;background:#f0f0f0;border-top:1px solid #a8a8a8;border-left:1px solid #808080;box-sizing:border-box;overflow:hidden">
<div class="a" style="left:0;top:0;width:113.4px;height:100%;background:#fff"></div>
<div class="a m fi" style="left:2.2px;top:0.80px;height:10px;line-height:10px">PLT Abn Distribution</div>
<svg class="a" style="left:124px;top:12.0px" width="6" height="5" viewBox="0 0 6 5"><path d="M1.4 3.4l1.6-1.6 1.6 1.6" fill="none" stroke="#8c8c8c" stroke-width="0.9"/></svg>
<svg class="a" style="left:124px;top:39.0px" width="6" height="5" viewBox="0 0 6 5"><path d="M1.4 1.4l1.6 1.6 1.6-1.6" fill="none" stroke="#a9a9a9" stroke-width="0.9"/></svg>
</div>
<svg class="a" style="left:0;top:0" width="800" height="450" viewBox="0 0 800 450" font-family="Liberation Sans,sans-serif">
<rect x="431" y="114.5" width="115.2" height="123.5" fill="#000"/>
<rect x="551.8" y="114.5" width="115.2" height="123.5" fill="#000"/>
<rect x="672.6" y="114.5" width="115.2" height="123.5" fill="#000"/>
<rect x="431" y="243.6" width="115.2" height="60.3" fill="#000"/>
<rect x="431" y="307.2" width="115.2" height="60" fill="#000"/>
<rect x="551.8" y="243.6" width="115.2" height="123.6" fill="#000"/>
<rect x="672.6" y="243.6" width="115.2" height="123.6" fill="#000"/>
<text x="436.8" y="122.8" font-size="6.6" fill="#e8e8e8" font-family="Liberation Mono,monospace" letter-spacing="-0.1" stroke="#e8e8e8" stroke-width="0.15">WDF</text>
<text x="557.6" y="122.8" font-size="6.6" fill="#e8e8e8" font-family="Liberation Mono,monospace" letter-spacing="-0.1" stroke="#e8e8e8" stroke-width="0.15">WNR</text>
<text x="678.4" y="122.8" font-size="6.6" fill="#e8e8e8" font-family="Liberation Mono,monospace" letter-spacing="-0.1" stroke="#e8e8e8" stroke-width="0.15">WPC</text>
<text x="557.4" y="252" font-size="6.6" fill="#e8e8e8" font-family="Liberation Mono,monospace" letter-spacing="-0.1" stroke="#e8e8e8" stroke-width="0.15">RET</text>
<text x="678.2" y="252" font-size="6.6" fill="#e8e8e8" font-family="Liberation Mono,monospace" letter-spacing="-0.1" stroke="#e8e8e8" stroke-width="0.15">PLT-F</text>
<text x="437.4" y="252.3" font-size="8.2" fill="#dcdcdc">RBC</text>
<text x="437.4" y="315.6" font-size="8.2" fill="#dcdcdc">PLT</text>
<path d="M437.2 125.1V231.9H543.9" fill="none" stroke="#9c1c9c" stroke-width="0.9"/>
<path d="M437.2 210.3h2.2M437.2 188.8h2.2M437.2 167.2h2.2M437.2 145.7h2.2M437.2 124.1h2.2M458.6 231.9v-1.9M480.1 231.9v-1.9M501.5 231.9v-1.9M523.0 231.9v-1.9M544.5 231.9v-1.9" stroke="#9c1c9c" stroke-width="0.8" fill="none"/>
<text x="544.1" y="236.9" font-size="4.4" fill="#d8d8d8" text-anchor="end" font-family="Liberation Sans,sans-serif">SSC</text>
<text transform="translate(435.7 132.5) rotate(-90)" font-size="4.4" fill="#d8d8d8" font-family="Liberation Sans,sans-serif">SFL</text>
<path d="M558.0 125.1V231.9H664.7" fill="none" stroke="#9c1c9c" stroke-width="0.9"/>
<path d="M558.0 210.3h2.2M558.0 188.8h2.2M558.0 167.2h2.2M558.0 145.7h2.2M558.0 124.1h2.2M579.5 231.9v-1.9M600.9 231.9v-1.9M622.4 231.9v-1.9M643.8 231.9v-1.9M665.2 231.9v-1.9" stroke="#9c1c9c" stroke-width="0.8" fill="none"/>
<text x="664.9" y="236.9" font-size="4.4" fill="#d8d8d8" text-anchor="end" font-family="Liberation Sans,sans-serif">SFL</text>
<text transform="translate(556.5 132.5) rotate(-90)" font-size="4.4" fill="#d8d8d8" font-family="Liberation Sans,sans-serif">FSC</text>
<path d="M678.8 125.1V231.9H785.5" fill="none" stroke="#9c1c9c" stroke-width="0.9"/>
<path d="M678.8 210.3h2.2M678.8 188.8h2.2M678.8 167.2h2.2M678.8 145.7h2.2M678.8 124.1h2.2M700.3 231.9v-1.9M721.7 231.9v-1.9M743.2 231.9v-1.9M764.6 231.9v-1.9M786.1 231.9v-1.9" stroke="#9c1c9c" stroke-width="0.8" fill="none"/>
<text x="785.7" y="236.9" font-size="4.4" fill="#d8d8d8" text-anchor="end" font-family="Liberation Sans,sans-serif">SSC</text>
<text transform="translate(677.3 132.5) rotate(-90)" font-size="4.4" fill="#d8d8d8" font-family="Liberation Sans,sans-serif">SFL</text>
<path d="M558.0 254.2V361.2H664.7" fill="none" stroke="#9c1c9c" stroke-width="0.9"/>
<path d="M558.0 339.6h2.2M558.0 318.1h2.2M558.0 296.5h2.2M558.0 275.0h2.2M558.0 253.4h2.2M579.5 361.2v-1.9M600.9 361.2v-1.9M622.4 361.2v-1.9M643.8 361.2v-1.9M665.2 361.2v-1.9" stroke="#9c1c9c" stroke-width="0.8" fill="none"/>
<text x="664.9" y="366.2" font-size="4.4" fill="#d8d8d8" text-anchor="end" font-family="Liberation Sans,sans-serif">SFL</text>
<text transform="translate(556.5 261.6) rotate(-90)" font-size="4.4" fill="#d8d8d8" font-family="Liberation Sans,sans-serif">FSC</text>
<path d="M678.8 254.2V361.2H785.5" fill="none" stroke="#9c1c9c" stroke-width="0.9"/>
<path d="M678.8 339.6h2.2M678.8 318.1h2.2M678.8 296.5h2.2M678.8 275.0h2.2M678.8 253.4h2.2M700.3 361.2v-1.9M721.7 361.2v-1.9M743.2 361.2v-1.9M764.6 361.2v-1.9M786.1 361.2v-1.9" stroke="#9c1c9c" stroke-width="0.8" fill="none"/>
<text x="785.7" y="366.2" font-size="4.4" fill="#d8d8d8" text-anchor="end" font-family="Liberation Sans,sans-serif">SFL</text>
<text transform="translate(677.3 261.6) rotate(-90)" font-size="4.4" fill="#d8d8d8" font-family="Liberation Sans,sans-serif">FSC</text>
<defs><filter id="sb" x="-5%" y="-5%" width="110%" height="110%"><feGaussianBlur stdDeviation="0.85"/></filter></defs><g filter="url(#sb)">
<path d="M466.9 204.2h1.2M470.8 201.7h1.2M467.1 202.6h1.2M468.9 207.2h1.2M468.1 198.3h1.2M469.7 205.1h1.2M470.6 207.1h1.2M469.0 202.2h1.2M473.0 202.9h1.2M468.7 198.9h1.2M469.0 203.7h1.2M468.5 202.9h1.2M468.9 205.7h1.2M470.5 204.3h1.2M465.9 205.1h1.2M467.0 202.2h1.2M466.8 202.8h1.2M467.7 203.7h1.2M473.9 204.0h1.2M471.2 198.8h1.2M468.1 205.5h1.2M468.6 204.5h1.2M469.9 199.7h1.2M470.4 200.5h1.2M472.1 202.0h1.2M470.0 203.4h1.2M470.8 201.4h1.2M470.6 203.1h1.2M470.4 205.8h1.2M469.8 200.5h1.2M469.8 205.1h1.2M471.7 202.4h1.2M469.5 205.2h1.2M469.3 204.0h1.2M469.7 201.1h1.2M467.8 201.5h1.2M468.8 208.7h1.2M469.7 207.2h1.2M469.6 205.9h1.2M468.7 206.0h1.2M471.8 202.6h1.2M466.6 209.9h1.2M468.7 206.7h1.2M471.1 199.5h1.2M471.3 210.2h1.2M468.7 205.9h1.2M469.8 200.1h1.2M468.6 204.5h1.2M470.1 206.0h1.2M468.1 208.0h1.2M467.3 205.8h1.2M470.8 202.5h1.2M467.0 199.5h1.2M469.0 205.1h1.2M472.0 200.1h1.2M468.5 205.5h1.2M470.5 194.8h1.2M468.5 211.6h1.2M471.1 200.3h1.2M468.2 203.9h1.2M472.2 206.1h1.2M468.1 208.7h1.2M467.5 209.7h1.2M468.3 201.3h1.2M469.0 208.4h1.2M469.7 204.5h1.2M466.8 200.1h1.2M468.5 201.1h1.2M470.1 202.2h1.2M470.1 203.7h1.2M468.4 203.5h1.2M469.0 206.4h1.2M468.5 202.2h1.2M465.8 208.5h1.2M471.3 203.0h1.2M469.2 198.7h1.2M469.1 204.0h1.2M472.0 204.7h1.2M469.6 194.3h1.2M470.9 204.3h1.2M466.5 203.4h1.2M464.1 215.0h1.2M470.2 205.6h1.2M470.3 195.6h1.2M469.9 197.7h1.2M471.4 195.8h1.2M466.8 207.2h1.2M472.3 199.5h1.2M466.1 205.8h1.2M471.0 200.0h1.2M468.5 200.5h1.2M467.7 200.4h1.2M470.3 206.0h1.2M472.1 203.5h1.2M469.5 199.7h1.2M469.8 198.5h1.2M465.9 205.1h1.2M470.5 206.6h1.2M470.8 204.5h1.2M467.9 203.3h1.2M469.2 199.2h1.2M467.6 197.5h1.2M468.9 203.7h1.2M467.3 208.1h1.2M468.8 205.3h1.2M471.4 200.7h1.2M465.6 205.3h1.2M467.1 207.6h1.2M468.8 206.9h1.2M471.6 196.1h1.2M470.5 201.0h1.2M468.2 201.4h1.2M469.5 206.5h1.2M471.7 197.6h1.2M469.8 194.6h1.2M468.4 205.3h1.2M467.7 203.8h1.2M468.6 206.8h1.2M468.4 200.0h1.2M466.6 209.2h1.2M470.7 203.1h1.2M469.2 203.7h1.2M469.4 202.5h1.2M469.4 198.7h1.2M466.9 208.8h1.2M469.7 203.6h1.2M468.6 203.4h1.2M470.0 201.0h1.2M469.1 204.1h1.2M468.5 200.2h1.2M468.3 199.2h1.2M472.0 195.1h1.2M469.0 201.0h1.2M468.0 203.4h1.2M470.6 203.8h1.2M469.2 201.0h1.2M468.2 206.4h1.2M469.2 199.0h1.2M467.9 198.9h1.2M466.2 206.7h1.2M469.7 202.5h1.2M471.6 201.3h1.2M469.5 206.3h1.2M467.8 197.2h1.2M467.0 206.1h1.2M471.8 199.3h1.2M470.8 202.2h1.2M468.8 201.1h1.2M469.8 196.7h1.2M468.4 198.5h1.2M468.2 210.7h1.2M473.3 202.8h1.2M466.8 201.3h1.2M466.2 209.9h1.2M470.4 200.8h1.2M470.0 205.4h1.2M467.0 200.8h1.2M468.6 203.2h1.2M469.4 202.0h1.2M469.7 201.2h1.2M466.6 208.3h1.2M469.2 204.9h1.2M466.8 202.1h1.2M471.1 198.9h1.2M470.9 202.2h1.2M469.7 202.9h1.2M468.5 207.5h1.2M467.3 208.6h1.2M468.5 199.7h1.2M470.8 199.7h1.2M467.8 206.3h1.2M472.0 197.3h1.2M468.4 210.0h1.2M470.9 202.7h1.2M468.3 202.0h1.2M467.5 201.9h1.2M468.8 202.6h1.2M470.9 202.7h1.2M466.1 206.5h1.2M467.7 201.3h1.2M469.0 201.9h1.2M467.7 202.0h1.2M472.6 201.7h1.2M468.0 207.1h1.2M469.5 206.1h1.2M471.7 196.5h1.2M467.6 203.4h1.2M468.8 207.9h1.2M469.9 202.5h1.2M469.2 202.5h1.2" stroke="#d01cd0" stroke-width="1.2" stroke-opacity="0.62" fill="none"/>
<path d="M473.3 190.7h1.1M473.7 184.7h1.1M471.6 192.1h1.1M474.2 192.2h1.1M473.8 191.5h1.1M473.0 190.6h1.1M472.4 187.0h1.1M472.1 190.7h1.1M472.9 187.4h1.1M472.9 193.4h1.1M473.3 184.1h1.1M475.3 183.9h1.1M474.5 185.9h1.1M474.8 180.8h1.1M474.7 186.2h1.1M470.8 195.9h1.1M471.5 201.9h1.1M474.3 186.7h1.1M472.3 194.3h1.1M473.1 189.8h1.1M474.8 184.6h1.1M474.1 186.1h1.1M471.3 191.1h1.1M474.2 188.5h1.1M474.0 179.9h1.1M474.1 187.7h1.1M471.6 187.4h1.1M471.7 187.5h1.1M473.4 189.4h1.1M473.6 188.7h1.1" stroke="#b018b0" stroke-width="1.1" stroke-opacity="0.4" fill="none"/>
<path d="M464.6 219.0h1.2M466.3 219.2h1.2M468.3 220.6h1.2M471.9 215.5h1.2M468.6 219.3h1.2M473.5 221.1h1.2M463.3 220.2h1.2M466.2 221.2h1.2M464.9 219.4h1.2M467.3 219.4h1.2M466.1 216.7h1.2M468.8 221.2h1.2M467.4 218.0h1.2M468.1 220.5h1.2M467.1 219.6h1.2M471.3 217.8h1.2M466.1 216.6h1.2M465.8 218.4h1.2M465.1 218.5h1.2M472.3 219.3h1.2M467.3 223.1h1.2M467.4 216.8h1.2M468.6 218.1h1.2M471.9 217.6h1.2M466.1 217.0h1.2M467.9 218.0h1.2M467.4 219.0h1.2M466.0 221.1h1.2M470.0 219.7h1.2M465.3 217.9h1.2M468.3 223.4h1.2M466.4 218.3h1.2M465.8 217.8h1.2M465.1 219.3h1.2M471.3 219.6h1.2M466.3 217.0h1.2M468.2 219.6h1.2M464.4 217.9h1.2M467.5 221.2h1.2M469.2 219.9h1.2M466.8 220.1h1.2M467.6 223.1h1.2M464.7 219.0h1.2M470.9 219.2h1.2M471.3 219.5h1.2M468.0 219.0h1.2M464.0 218.0h1.2M473.4 220.6h1.2M469.2 221.1h1.2M469.1 221.2h1.2" stroke="#b818b8" stroke-width="1.2" stroke-opacity="0.55" fill="none"/>
<path d="M481.2 192.5h1.2M484.7 191.5h1.2M478.4 192.1h1.2M479.3 201.5h1.2M481.2 183.2h1.2M478.5 211.8h1.2M481.2 196.7h1.2M481.2 198.2h1.2M482.1 210.5h1.2M475.3 209.3h1.2M482.0 191.5h1.2M488.3 194.0h1.2M485.4 206.2h1.2M478.1 200.0h1.2M483.8 193.9h1.2M475.9 190.4h1.2M482.7 182.9h1.2M486.8 193.0h1.2M481.0 191.6h1.2M480.6 186.3h1.2M481.4 198.4h1.2M480.4 193.8h1.2M477.1 200.2h1.2M479.3 197.1h1.2M479.9 189.1h1.2M483.9 181.9h1.2M488.3 195.5h1.2M482.5 187.0h1.2M483.9 210.7h1.2M484.4 180.2h1.2M479.4 201.5h1.2M481.9 181.9h1.2M479.5 186.2h1.2M482.6 187.9h1.2M477.7 225.5h1.2M487.8 184.3h1.2M482.4 196.1h1.2M479.7 206.3h1.2M481.2 191.3h1.2M480.7 193.8h1.2M483.9 203.9h1.2M478.6 189.7h1.2M478.3 203.6h1.2M480.9 204.8h1.2M484.2 174.2h1.2M482.5 197.6h1.2M484.8 181.0h1.2M482.8 187.5h1.2M479.3 198.6h1.2M483.8 185.4h1.2M480.5 167.4h1.2M478.5 207.0h1.2M484.7 170.4h1.2M478.7 199.3h1.2M484.4 208.3h1.2M482.3 197.3h1.2M479.4 189.7h1.2M481.8 186.4h1.2M482.3 190.7h1.2M480.5 210.8h1.2M483.0 199.8h1.2M483.1 178.3h1.2M480.5 200.9h1.2M477.1 208.3h1.2M480.2 198.9h1.2M482.5 181.2h1.2M488.8 183.1h1.2M484.9 189.3h1.2M483.5 186.3h1.2M479.2 204.9h1.2M488.0 186.4h1.2M480.3 205.3h1.2M478.9 202.5h1.2M478.6 201.3h1.2M481.0 208.4h1.2M484.3 182.1h1.2M484.9 183.2h1.2M481.5 211.7h1.2M484.0 189.2h1.2M484.6 197.2h1.2M478.8 190.7h1.2M485.8 192.2h1.2M482.4 191.3h1.2M477.8 188.8h1.2M482.3 197.4h1.2M484.2 171.7h1.2M483.8 203.3h1.2M482.5 209.5h1.2M481.3 188.3h1.2M480.1 213.4h1.2M477.4 191.9h1.2M478.9 200.8h1.2M485.9 192.3h1.2M478.2 195.1h1.2M483.0 178.1h1.2M484.7 189.6h1.2M485.3 180.9h1.2M486.6 179.7h1.2M487.0 175.6h1.2M485.8 191.4h1.2M477.8 191.9h1.2M483.9 184.3h1.2M479.9 197.8h1.2M485.5 161.5h1.2M479.8 199.5h1.2M481.0 206.1h1.2M476.1 222.6h1.2M483.3 198.7h1.2M483.1 205.8h1.2M482.8 188.3h1.2M483.7 200.0h1.2M478.1 182.3h1.2M482.7 196.3h1.2M481.4 202.1h1.2M479.7 212.3h1.2M480.6 190.4h1.2M481.4 203.2h1.2M481.6 211.5h1.2M478.7 207.6h1.2M484.3 183.8h1.2M478.3 217.7h1.2M484.4 190.2h1.2M476.2 186.1h1.2M479.6 195.6h1.2M486.7 203.9h1.2M483.8 184.9h1.2M478.7 192.3h1.2M476.1 227.6h1.2M481.4 188.1h1.2M484.5 196.2h1.2M476.5 208.6h1.2M482.7 180.4h1.2M481.8 200.4h1.2M479.7 202.5h1.2M485.1 185.7h1.2M479.5 168.2h1.2M479.5 208.4h1.2M482.3 210.5h1.2M486.5 195.8h1.2M486.6 178.7h1.2M482.9 199.5h1.2M482.0 190.1h1.2M478.4 196.1h1.2M485.5 191.4h1.2M484.0 187.9h1.2M483.7 184.1h1.2M482.9 192.8h1.2M483.3 188.5h1.2M478.9 191.0h1.2M482.1 212.6h1.2" stroke="#22a822" stroke-width="1.2" stroke-opacity="0.34" fill="none"/>
<path d="M485.4 176.7h1.2M487.8 174.5h1.2M483.2 173.6h1.2M483.9 178.8h1.2M487.7 175.8h1.2M481.1 175.2h1.2M488.7 164.5h1.2M488.4 172.6h1.2M486.6 167.7h1.2M484.7 169.2h1.2M492.5 173.8h1.2M487.3 168.2h1.2M485.6 168.6h1.2M484.2 177.0h1.2M485.4 177.1h1.2M483.6 177.3h1.2M486.0 176.0h1.2M486.8 166.7h1.2M489.2 169.6h1.2M486.7 166.7h1.2M487.1 169.7h1.2M486.9 174.1h1.2M486.0 163.4h1.2M486.8 177.6h1.2M488.6 165.3h1.2M487.5 174.4h1.2M486.8 174.6h1.2M485.7 173.2h1.2M488.6 169.2h1.2M483.7 171.1h1.2M488.0 161.0h1.2M484.8 175.4h1.2M486.1 172.5h1.2M483.5 177.2h1.2M490.1 171.2h1.2M485.7 164.9h1.2M488.2 172.8h1.2M484.2 179.1h1.2M487.7 175.8h1.2M483.1 171.0h1.2" stroke="#1f8a1f" stroke-width="1.2" stroke-opacity="0.3" fill="none"/>
<path d="M498.6 209.9h1.2M501.8 214.0h1.2M501.2 210.1h1.2M491.8 216.1h1.2M502.0 213.5h1.2M502.6 210.8h1.2M492.1 210.8h1.2M501.4 215.7h1.2M492.5 213.2h1.2M499.5 212.7h1.2M487.0 214.5h1.2M490.1 218.7h1.2M491.7 216.0h1.2M507.9 212.9h1.2M504.8 213.4h1.2M488.0 214.9h1.2M491.0 214.0h1.2M510.1 205.5h1.2M498.1 210.1h1.2M504.1 213.0h1.2M493.6 217.7h1.2M496.6 215.3h1.2M497.0 211.7h1.2M493.2 213.7h1.2M499.2 212.3h1.2M509.4 208.5h1.2M492.4 212.8h1.2M490.1 212.1h1.2M490.1 216.6h1.2M495.8 212.8h1.2M498.1 214.4h1.2M499.6 213.4h1.2M492.0 213.8h1.2M490.9 214.5h1.2M490.5 214.1h1.2M494.3 213.1h1.2M493.7 212.8h1.2M503.1 210.2h1.2M489.6 215.4h1.2M488.5 213.4h1.2M495.1 210.2h1.2M476.6 219.6h1.2M500.7 208.4h1.2M490.5 215.8h1.2M483.3 215.3h1.2M488.3 215.1h1.2M484.3 218.4h1.2M494.8 214.0h1.2M492.4 210.2h1.2M493.9 211.2h1.2M495.1 211.7h1.2M493.5 213.4h1.2M500.5 213.1h1.2M489.5 215.0h1.2M504.4 211.4h1.2M491.1 214.3h1.2M493.9 215.5h1.2M495.9 213.8h1.2M507.9 206.8h1.2M488.6 212.1h1.2M486.5 217.6h1.2M498.1 215.5h1.2M483.3 215.3h1.2M504.6 212.3h1.2M501.2 213.1h1.2M495.7 213.1h1.2M496.1 214.6h1.2M494.7 214.0h1.2M503.5 208.6h1.2M491.4 215.5h1.2M493.9 213.4h1.2M508.1 210.1h1.2M493.6 215.9h1.2M509.8 206.7h1.2M491.6 214.6h1.2M492.9 218.1h1.2M498.4 211.6h1.2M498.0 210.9h1.2M492.0 214.5h1.2M508.4 205.0h1.2M498.7 214.8h1.2M500.9 215.1h1.2M498.2 212.6h1.2M494.3 212.0h1.2M504.6 208.2h1.2M494.5 212.5h1.2M489.7 210.8h1.2M493.3 214.1h1.2M496.8 214.4h1.2M494.2 212.4h1.2M497.7 213.8h1.2M489.3 212.2h1.2M490.0 216.9h1.2M500.9 209.8h1.2M496.6 214.4h1.2M503.0 209.6h1.2M494.8 216.1h1.2M510.6 211.4h1.2M489.0 216.1h1.2M493.7 213.6h1.2M491.3 213.6h1.2M496.4 216.3h1.2M499.9 212.7h1.2M495.3 211.9h1.2M494.8 215.8h1.2M501.5 215.1h1.2M497.0 212.7h1.2M486.1 216.8h1.2M486.1 219.0h1.2M491.8 214.4h1.2M487.2 214.8h1.2M490.6 216.9h1.2M496.3 210.7h1.2M484.0 216.6h1.2M492.0 212.2h1.2M498.9 211.8h1.2M495.8 212.0h1.2M491.9 213.5h1.2M486.3 217.2h1.2M497.0 209.5h1.2M496.7 215.0h1.2M497.6 215.0h1.2M493.9 213.7h1.2M487.3 214.0h1.2M484.2 215.0h1.2M497.2 213.6h1.2M502.5 211.3h1.2M489.9 215.8h1.2M495.6 216.5h1.2M507.6 211.3h1.2M488.5 214.4h1.2M496.2 211.6h1.2M499.0 213.4h1.2M500.6 212.1h1.2M489.8 213.4h1.2M495.5 215.7h1.2M505.3 212.0h1.2M498.0 213.7h1.2M501.1 213.9h1.2M499.8 209.0h1.2M501.4 212.1h1.2M493.1 214.9h1.2M497.2 212.6h1.2M485.6 216.5h1.2M498.8 212.1h1.2M486.3 216.9h1.2M499.9 212.2h1.2M497.8 211.8h1.2M491.9 215.3h1.2M493.5 214.2h1.2M515.2 208.5h1.2M495.4 210.2h1.2M496.5 214.3h1.2M491.2 214.1h1.2M482.4 218.3h1.2M492.3 215.5h1.2M503.5 210.4h1.2M501.5 211.8h1.2M494.1 213.1h1.2M491.1 217.0h1.2M500.2 209.9h1.2M500.1 210.4h1.2M487.2 218.0h1.2M488.6 217.6h1.2M497.2 214.4h1.2M499.1 214.2h1.2M497.9 213.6h1.2M497.6 214.6h1.2M493.7 215.7h1.2M504.4 210.3h1.2M497.8 211.5h1.2M493.9 214.2h1.2M493.0 212.3h1.2M495.4 213.6h1.2M497.8 213.8h1.2M485.7 218.9h1.2M494.1 212.2h1.2M493.5 214.6h1.2M500.5 211.0h1.2M495.6 210.2h1.2M496.4 212.7h1.2M493.4 215.5h1.2M506.7 211.7h1.2M491.7 217.3h1.2M493.5 213.7h1.2M492.3 215.0h1.2M498.9 212.4h1.2M494.2 213.3h1.2M493.6 215.6h1.2M492.3 213.9h1.2M493.9 212.3h1.2M493.4 211.1h1.2M498.2 213.4h1.2M494.6 216.4h1.2M490.9 215.7h1.2M498.0 211.4h1.2M494.5 215.2h1.2M496.0 213.6h1.2M503.9 211.0h1.2M485.2 215.0h1.2M500.4 211.5h1.2M488.1 211.8h1.2M498.2 215.2h1.2M487.0 211.8h1.2M498.1 211.4h1.2M493.6 213.2h1.2M490.4 215.6h1.2M501.1 212.1h1.2M492.8 216.0h1.2M495.2 214.4h1.2M490.3 216.0h1.2M500.6 214.0h1.2M495.9 213.9h1.2M492.6 215.8h1.2M500.6 213.6h1.2M492.6 211.8h1.2M495.0 213.0h1.2M491.4 215.6h1.2M501.3 212.2h1.2M502.2 211.9h1.2M489.5 214.0h1.2M493.8 215.0h1.2M501.0 211.8h1.2M501.0 210.0h1.2M495.6 215.9h1.2M498.7 214.2h1.2M483.6 213.8h1.2M491.0 216.5h1.2M504.7 209.2h1.2M489.2 213.3h1.2M490.6 215.8h1.2M494.7 217.0h1.2M499.4 210.7h1.2M496.8 212.5h1.2M500.6 213.3h1.2M494.0 215.3h1.2M498.8 212.0h1.2M497.4 213.9h1.2M493.3 212.6h1.2M502.9 210.9h1.2M492.3 215.1h1.2M487.0 216.0h1.2M487.4 214.9h1.2M484.8 215.2h1.2M500.6 211.3h1.2M489.4 218.3h1.2M492.6 216.8h1.2M491.7 211.7h1.2M506.0 209.1h1.2M500.6 213.8h1.2M487.9 215.7h1.2M492.5 215.3h1.2M494.8 211.1h1.2M496.3 214.4h1.2M494.1 214.7h1.2M492.4 214.1h1.2M497.6 212.8h1.2M503.4 212.5h1.2M500.8 212.9h1.2M495.8 211.0h1.2M502.6 214.2h1.2M496.7 212.4h1.2M496.0 215.3h1.2M496.7 211.0h1.2M494.1 212.2h1.2M493.9 212.1h1.2M491.3 217.3h1.2M500.8 208.6h1.2M489.6 214.2h1.2M492.6 211.6h1.2M499.9 208.9h1.2M499.9 213.1h1.2M493.1 212.8h1.2M496.0 213.3h1.2M482.7 214.9h1.2M498.6 212.1h1.2M492.6 212.3h1.2M491.1 213.2h1.2M511.1 206.1h1.2M504.7 211.3h1.2M496.9 213.1h1.2M494.2 216.6h1.2M498.5 212.2h1.2M494.9 213.8h1.2M488.8 214.7h1.2M492.3 215.4h1.2M498.1 209.0h1.2M494.8 215.3h1.2M487.4 213.5h1.2M501.3 211.2h1.2M492.3 212.0h1.2M496.3 212.0h1.2M497.0 213.5h1.2M499.5 211.4h1.2M492.5 214.2h1.2M495.1 213.7h1.2M492.4 213.7h1.2M491.9 213.3h1.2M497.1 214.9h1.2M492.8 215.1h1.2" stroke="#1cc4c4" stroke-width="1.2" stroke-opacity="0.58" fill="none"/>
<path d="M481.7 217.5h1.2M482.9 215.7h1.2M482.9 217.6h1.2M464.0 223.6h1.2M484.1 221.0h1.2M475.1 219.5h1.2M481.1 215.3h1.2M485.9 217.0h1.2M475.6 216.5h1.2M479.6 223.3h1.2M488.6 209.6h1.2M472.0 221.8h1.2M479.1 216.7h1.2M482.9 217.1h1.2M481.6 217.9h1.2M475.8 222.1h1.2M478.6 220.8h1.2M483.3 216.9h1.2M480.7 217.5h1.2M471.2 219.8h1.2M481.0 213.9h1.2M473.7 222.2h1.2M482.8 213.4h1.2M482.2 217.0h1.2M484.4 215.7h1.2M478.5 216.6h1.2M480.8 217.3h1.2M476.7 218.0h1.2M476.9 220.2h1.2M474.2 216.1h1.2M476.2 221.4h1.2M478.1 219.9h1.2M483.2 215.7h1.2M483.9 217.8h1.2M479.4 216.4h1.2M478.9 215.2h1.2M478.4 217.0h1.2M482.3 217.9h1.2M477.6 220.5h1.2M485.7 216.2h1.2M476.9 219.9h1.2M468.2 220.1h1.2M484.1 221.1h1.2M477.5 222.0h1.2M492.2 218.3h1.2M469.6 223.5h1.2M481.6 219.6h1.2M478.8 216.8h1.2M479.9 221.3h1.2M483.8 216.0h1.2M482.4 219.0h1.2M482.7 216.9h1.2M476.4 217.2h1.2M477.6 217.3h1.2M471.7 217.2h1.2M483.4 214.2h1.2M473.8 219.6h1.2M487.7 218.3h1.2M477.4 216.3h1.2M476.9 216.7h1.2M477.7 219.6h1.2M474.5 217.7h1.2M478.8 218.1h1.2M475.9 217.3h1.2M474.2 217.9h1.2M482.3 216.5h1.2M465.7 223.6h1.2M479.1 216.1h1.2M476.8 211.9h1.2M472.9 222.7h1.2M491.6 219.2h1.2M476.5 219.0h1.2M482.9 214.1h1.2M487.8 213.7h1.2M480.9 214.9h1.2M481.7 217.2h1.2M484.4 213.8h1.2M481.1 221.6h1.2M474.6 220.3h1.2M481.8 216.1h1.2M479.6 221.2h1.2M485.8 217.3h1.2M480.5 215.0h1.2M481.6 221.4h1.2M484.1 213.4h1.2M469.7 219.5h1.2M480.4 216.4h1.2M478.8 219.0h1.2M484.4 216.9h1.2M485.1 213.0h1.2M482.5 218.0h1.2M473.7 222.6h1.2M471.4 217.1h1.2M493.6 216.6h1.2M482.7 220.1h1.2M484.8 213.7h1.2M483.2 220.0h1.2M479.3 218.2h1.2M478.3 220.0h1.2M477.0 217.4h1.2" stroke="#1cacac" stroke-width="1.2" stroke-opacity="0.4" fill="none"/>
<path d="M459.8 225.6h1.2M465.5 227.0h1.2M463.0 225.1h1.2M465.9 226.8h1.2M469.4 225.2h1.2M463.1 227.3h1.2M470.4 225.7h1.2M464.2 225.1h1.2M463.3 227.9h1.2M468.0 227.6h1.2M458.5 228.2h1.2M461.2 227.6h1.2M455.6 227.2h1.2M461.4 228.5h1.2M465.2 228.2h1.2M463.2 229.3h1.2M463.2 229.2h1.2M462.6 225.2h1.2M468.0 225.5h1.2M464.2 224.5h1.2M463.3 226.7h1.2M462.0 227.2h1.2M456.0 228.5h1.2M463.3 228.6h1.2M463.2 225.6h1.2M462.9 227.0h1.2M466.8 225.5h1.2M461.6 227.3h1.2M467.5 223.6h1.2M460.5 225.9h1.2M471.3 227.5h1.2M467.7 226.8h1.2M460.5 228.4h1.2M462.8 225.5h1.2M471.8 223.6h1.2M469.9 226.2h1.2M461.1 227.0h1.2M461.4 227.0h1.2M462.0 225.0h1.2M474.7 224.7h1.2M468.4 226.0h1.2M467.0 224.4h1.2M460.2 222.2h1.2M468.5 226.6h1.2M460.2 228.0h1.2M467.3 230.3h1.2M465.6 227.6h1.2M467.1 227.3h1.2M464.5 225.8h1.2M467.5 227.9h1.2M460.0 225.2h1.2M464.7 229.0h1.2M463.6 224.1h1.2M467.8 227.2h1.2M472.1 225.9h1.2M472.1 224.6h1.2M468.1 226.2h1.2M460.0 226.5h1.2M469.9 227.5h1.2M463.3 228.1h1.2M468.2 227.3h1.2M465.8 226.7h1.2M461.4 226.6h1.2M465.0 225.3h1.2M463.5 226.7h1.2M465.6 227.8h1.2M460.6 226.2h1.2M465.6 225.8h1.2M465.8 225.6h1.2M469.1 225.6h1.2M460.4 227.9h1.2M470.7 223.1h1.2M464.1 226.6h1.2M468.8 228.1h1.2M463.8 224.3h1.2M467.3 227.6h1.2M466.4 226.3h1.2M461.9 230.2h1.2M459.8 224.7h1.2M468.4 226.4h1.2M467.2 226.7h1.2M471.3 227.8h1.2M462.7 228.0h1.2M459.9 224.5h1.2M469.2 225.3h1.2M456.4 227.2h1.2M462.2 227.4h1.2M464.3 225.3h1.2M462.0 227.8h1.2M461.1 226.9h1.2M460.9 227.4h1.2M471.5 226.5h1.2M469.0 226.6h1.2M460.9 226.4h1.2M465.0 227.0h1.2M462.4 227.5h1.2M461.9 226.8h1.2M464.4 224.8h1.2M468.5 226.1h1.2M465.0 226.3h1.2M456.4 225.2h1.2M461.3 228.1h1.2M462.5 227.5h1.2M460.6 225.6h1.2M463.0 228.1h1.2M458.3 226.8h1.2M466.2 226.4h1.2M464.7 227.5h1.2M465.6 224.9h1.2M466.9 225.1h1.2M463.5 228.6h1.2M474.2 227.5h1.2M466.1 225.2h1.2M462.0 229.0h1.2M465.7 224.3h1.2M470.7 226.6h1.2M469.7 226.5h1.2M456.3 226.2h1.2M464.1 226.2h1.2M470.3 224.9h1.2M464.2 226.4h1.2M464.1 225.0h1.2M459.6 223.3h1.2M465.9 226.0h1.2M465.3 224.8h1.2M464.5 225.0h1.2M460.8 227.3h1.2M467.1 227.0h1.2M464.4 225.9h1.2M470.1 227.6h1.2M462.1 225.1h1.2M466.1 226.7h1.2M461.5 230.0h1.2M456.5 226.0h1.2M465.7 227.7h1.2M457.5 226.5h1.2M470.3 227.8h1.2M463.7 226.6h1.2M461.3 227.3h1.2M460.3 224.0h1.2M458.8 227.1h1.2M459.8 228.5h1.2M469.7 227.3h1.2M467.3 227.7h1.2M465.8 227.5h1.2M466.5 227.3h1.2M460.7 225.9h1.2M460.9 228.0h1.2M466.4 225.1h1.2M460.8 226.0h1.2M467.9 225.9h1.2M463.6 225.5h1.2M464.4 228.7h1.2M462.0 226.2h1.2M471.2 226.8h1.2M460.4 228.4h1.2M459.9 227.7h1.2M454.9 226.0h1.2M468.0 225.2h1.2M461.9 226.8h1.2M464.6 225.7h1.2M462.3 229.2h1.2M470.4 226.3h1.2M460.2 226.1h1.2M463.6 227.2h1.2M470.7 225.1h1.2M465.1 225.7h1.2M465.1 225.4h1.2M466.2 227.9h1.2M463.1 226.1h1.2" stroke="#1826d8" stroke-width="1.2" stroke-opacity="0.6" fill="none"/>
<path d="M499.6 188.2h1.2M521.8 187.9h1.2M493.4 192.1h1.2M517.7 195.7h1.2M491.5 217.2h1.2M496.5 193.0h1.2M498.0 201.8h1.2M488.3 198.4h1.2M495.3 206.6h1.2M508.1 207.6h1.2M496.5 207.3h1.2M495.3 210.6h1.2M503.4 196.2h1.2M514.2 186.4h1.2M485.4 192.8h1.2M496.4 188.9h1.2M482.4 183.0h1.2M499.6 193.1h1.2M526.8 207.1h1.2M483.1 212.0h1.2M499.5 209.8h1.2M483.6 210.6h1.2M512.5 196.3h1.2M487.0 196.6h1.2M501.6 221.9h1.2M521.8 213.7h1.2M495.2 197.1h1.2M502.9 197.6h1.2M492.0 198.2h1.2M509.2 199.5h1.2M501.2 197.7h1.2M495.6 197.1h1.2M514.6 202.2h1.2M517.6 198.5h1.2M512.0 187.6h1.2M492.8 199.5h1.2M489.8 199.0h1.2M486.0 198.6h1.2M489.4 200.0h1.2M494.2 191.0h1.2M492.8 200.3h1.2M481.5 200.9h1.2M514.4 198.0h1.2M505.3 205.7h1.2M487.6 212.0h1.2M530.9 190.8h1.2M526.2 193.7h1.2M517.2 183.7h1.2M513.0 201.3h1.2M481.3 192.6h1.2M484.4 191.9h1.2M503.0 198.4h1.2M465.3 197.3h1.2M504.2 200.9h1.2M520.2 183.4h1.2M501.3 200.3h1.2M507.5 187.9h1.2M481.0 198.5h1.2M499.1 183.7h1.2M502.9 200.0h1.2M507.7 176.4h1.2M504.7 192.0h1.2M491.9 207.1h1.2M520.2 201.4h1.2M496.7 211.9h1.2M486.4 198.7h1.2M491.5 191.2h1.2M500.6 218.5h1.2M501.3 204.6h1.2M497.7 210.3h1.2M500.5 192.1h1.2M499.4 213.1h1.2M497.0 210.9h1.2M497.2 218.4h1.2M501.8 206.0h1.2M494.3 207.6h1.2M495.1 186.7h1.2M502.1 189.1h1.2M517.4 207.2h1.2M498.3 206.3h1.2" stroke="#1c1c80" stroke-width="1.2" stroke-opacity="0.36" fill="none"/>
<path d="M497.4 221.7h1.2M509.1 219.0h1.2M528.5 212.1h1.2M510.5 218.1h1.2M515.6 211.9h1.2M507.4 221.5h1.2M509.4 218.7h1.2M504.8 214.3h1.2M502.0 217.8h1.2M520.0 217.3h1.2M511.4 217.8h1.2M515.9 216.1h1.2M516.4 222.9h1.2M526.5 215.3h1.2M505.4 222.8h1.2M519.0 220.7h1.2" stroke="#7a1818" stroke-width="1.2" stroke-opacity="0.3" fill="none"/>
<path d="M628.3 193.1h1.2M627.8 198.3h1.2M630.8 190.5h1.2M629.6 193.0h1.2M625.1 194.4h1.2M622.9 201.6h1.2M627.6 194.9h1.2M625.6 194.2h1.2M625.1 195.4h1.2M627.8 197.2h1.2M623.4 191.2h1.2M628.0 189.1h1.2M627.6 193.2h1.2M626.1 194.9h1.2M623.0 198.6h1.2M629.8 192.3h1.2M626.8 196.5h1.2M624.8 191.5h1.2M631.2 184.6h1.2M622.5 193.5h1.2M629.1 190.6h1.2M626.2 202.2h1.2M627.0 193.5h1.2M627.7 189.8h1.2M627.7 194.6h1.2M626.8 199.3h1.2M626.3 194.1h1.2M625.3 200.1h1.2M622.5 192.2h1.2M624.6 193.4h1.2M628.6 194.4h1.2M628.2 194.7h1.2M625.2 190.5h1.2M622.4 193.1h1.2M624.4 196.2h1.2M630.0 191.0h1.2M622.8 194.8h1.2M623.8 193.5h1.2M628.5 192.6h1.2M632.1 192.1h1.2M628.0 192.3h1.2M618.9 190.4h1.2M625.3 195.4h1.2M626.9 190.7h1.2M625.4 191.9h1.2M628.8 193.1h1.2M628.8 197.6h1.2M623.3 196.6h1.2M620.3 191.7h1.2M623.9 192.3h1.2M629.5 194.4h1.2M624.5 198.0h1.2M625.3 189.8h1.2M628.3 196.5h1.2M622.4 192.8h1.2M628.7 193.5h1.2M625.2 193.6h1.2M627.8 191.1h1.2M630.4 188.4h1.2M623.8 201.2h1.2M623.6 192.4h1.2M621.2 188.5h1.2M623.3 192.7h1.2M623.0 199.7h1.2M624.0 192.6h1.2M626.3 196.0h1.2M630.6 188.5h1.2M632.7 194.1h1.2M626.3 186.9h1.2M627.2 186.6h1.2M627.6 191.4h1.2M628.2 190.8h1.2M624.1 201.6h1.2M629.4 195.0h1.2M622.1 198.0h1.2M623.5 186.9h1.2M630.6 192.3h1.2M629.4 196.7h1.2M630.2 201.8h1.2M628.7 191.6h1.2M626.4 199.0h1.2M630.0 183.0h1.2M625.8 191.8h1.2M626.7 192.1h1.2M630.9 189.8h1.2M629.8 186.6h1.2M621.7 187.9h1.2M625.4 189.5h1.2M623.8 195.1h1.2M627.9 194.2h1.2M627.7 191.1h1.2M625.4 187.4h1.2M626.6 189.0h1.2M624.7 195.8h1.2M626.4 198.7h1.2M626.4 184.6h1.2M621.2 199.7h1.2M628.8 192.4h1.2M630.4 193.0h1.2M631.3 193.3h1.2M624.5 195.6h1.2M623.5 191.9h1.2M631.1 196.6h1.2M623.7 191.6h1.2M627.2 190.6h1.2M626.1 198.3h1.2M625.5 196.7h1.2M627.0 194.2h1.2M623.3 196.3h1.2M630.5 192.9h1.2M623.5 194.6h1.2M625.4 197.6h1.2M627.9 193.3h1.2M622.0 194.5h1.2M628.1 188.9h1.2M624.5 185.5h1.2M628.6 192.3h1.2M618.5 187.4h1.2M624.8 192.5h1.2M626.9 192.2h1.2M627.2 197.7h1.2M624.0 198.9h1.2M627.0 190.1h1.2M628.4 188.3h1.2M626.8 189.3h1.2M625.0 193.8h1.2M619.4 192.8h1.2M627.3 192.8h1.2M627.9 195.2h1.2M626.6 189.4h1.2M627.5 196.8h1.2M623.3 189.5h1.2M622.3 195.4h1.2M626.3 188.4h1.2M629.9 196.3h1.2M626.7 194.5h1.2M625.9 193.4h1.2M628.3 195.7h1.2M625.1 193.4h1.2M632.0 192.9h1.2M622.7 192.7h1.2M620.4 202.0h1.2M627.4 196.0h1.2M625.2 200.9h1.2M623.7 192.3h1.2M620.5 196.5h1.2M624.2 199.8h1.2M626.8 189.3h1.2M623.6 195.7h1.2M623.9 193.6h1.2M625.3 190.2h1.2M623.1 198.8h1.2M623.1 193.6h1.2M629.4 191.3h1.2M620.6 197.6h1.2M631.3 193.9h1.2M622.2 195.5h1.2M627.2 190.3h1.2M628.0 184.3h1.2M625.6 188.2h1.2M622.2 194.4h1.2M625.2 199.8h1.2M619.9 188.7h1.2M622.6 197.5h1.2M629.0 194.6h1.2M627.5 190.7h1.2M625.5 191.3h1.2M617.4 198.2h1.2M626.0 201.6h1.2M629.1 196.2h1.2M630.5 187.8h1.2M622.7 195.6h1.2M627.2 187.1h1.2M627.8 188.6h1.2M624.6 199.1h1.2M623.8 190.7h1.2M627.9 193.7h1.2M627.8 190.4h1.2M628.2 184.3h1.2M624.4 197.9h1.2M623.6 191.7h1.2M626.9 198.4h1.2M630.5 191.0h1.2M623.2 199.4h1.2M624.8 194.0h1.2M624.8 190.2h1.2M619.0 188.8h1.2M621.6 187.7h1.2M622.2 197.5h1.2M628.0 195.4h1.2M626.5 187.8h1.2M628.6 190.7h1.2M625.0 196.7h1.2M625.9 193.0h1.2M622.5 196.3h1.2M627.0 196.3h1.2M632.6 188.7h1.2M625.7 195.7h1.2M626.9 194.7h1.2M629.4 188.0h1.2M624.8 197.5h1.2M626.4 192.5h1.2M630.6 187.6h1.2M625.7 199.2h1.2M626.6 190.0h1.2M628.3 192.1h1.2M624.0 193.2h1.2M621.1 194.4h1.2M623.7 190.3h1.2M628.4 193.8h1.2M625.5 198.6h1.2M628.1 202.2h1.2M623.8 196.2h1.2M621.0 194.8h1.2M630.7 191.7h1.2M626.7 196.8h1.2M626.6 190.8h1.2M631.9 189.7h1.2M625.7 196.9h1.2M625.2 199.3h1.2M629.8 196.3h1.2M630.3 197.5h1.2M623.4 191.1h1.2M626.9 194.2h1.2M619.1 200.3h1.2M623.4 187.8h1.2M627.3 194.4h1.2M630.3 195.4h1.2M626.6 196.3h1.2M625.8 187.9h1.2M623.9 196.7h1.2M624.2 197.7h1.2M624.0 195.6h1.2M625.5 196.4h1.2M626.2 194.0h1.2M623.7 197.5h1.2M625.7 195.1h1.2M629.1 190.6h1.2M624.2 192.5h1.2M631.0 190.5h1.2M624.7 188.8h1.2M626.5 189.1h1.2M623.5 194.6h1.2M623.4 192.4h1.2M623.4 191.6h1.2M630.1 186.4h1.2M626.3 194.2h1.2M625.9 194.2h1.2M629.0 188.9h1.2M625.3 195.6h1.2M631.4 189.4h1.2M626.3 187.8h1.2M627.5 189.4h1.2M622.8 195.3h1.2M634.8 187.6h1.2M631.9 191.3h1.2M627.8 195.2h1.2M629.9 193.6h1.2M624.2 192.4h1.2M629.5 190.7h1.2M627.5 193.6h1.2M626.8 193.5h1.2M627.1 196.8h1.2M626.0 191.8h1.2M621.6 188.3h1.2M621.5 194.5h1.2M624.2 189.9h1.2M626.7 197.4h1.2M630.6 191.2h1.2M625.8 197.5h1.2M624.3 191.8h1.2M623.8 190.0h1.2M628.2 194.3h1.2M626.0 191.0h1.2M629.6 197.4h1.2M620.6 200.2h1.2M625.4 192.4h1.2M625.7 190.8h1.2M629.7 188.6h1.2M626.8 192.2h1.2M630.6 196.2h1.2M627.0 195.6h1.2M627.8 194.3h1.2M619.3 192.9h1.2M624.7 195.7h1.2M627.8 191.6h1.2M625.1 188.9h1.2M627.3 193.2h1.2M624.4 191.3h1.2M628.1 191.2h1.2M626.7 191.0h1.2M619.3 191.5h1.2M625.6 196.4h1.2M630.7 191.8h1.2M627.7 194.8h1.2M625.7 196.4h1.2M630.2 189.4h1.2M630.6 193.9h1.2M625.4 190.3h1.2M627.0 189.1h1.2M628.8 195.8h1.2M623.0 195.6h1.2M626.9 193.8h1.2M629.1 193.8h1.2M625.1 195.0h1.2M622.8 187.4h1.2M626.5 197.7h1.2M621.8 192.0h1.2M624.9 191.8h1.2M626.3 199.3h1.2M630.1 198.3h1.2M627.9 194.4h1.2M620.9 193.2h1.2M624.4 188.3h1.2M628.5 187.7h1.2M630.5 197.0h1.2M626.8 195.4h1.2M627.0 193.8h1.2M629.0 191.5h1.2M626.9 194.2h1.2M629.7 190.0h1.2M627.2 193.1h1.2M627.5 195.9h1.2M626.4 195.2h1.2M626.0 198.7h1.2M626.6 195.6h1.2M624.1 191.8h1.2M627.3 197.8h1.2M623.8 192.4h1.2M625.6 193.3h1.2M625.6 191.4h1.2M626.1 193.8h1.2M630.1 191.1h1.2M622.9 195.4h1.2M627.9 193.1h1.2M622.1 196.2h1.2M622.2 196.6h1.2M627.2 193.0h1.2M625.0 196.2h1.2M628.4 187.0h1.2M626.9 185.0h1.2M626.4 197.1h1.2M630.7 189.3h1.2M630.0 201.7h1.2M628.3 186.0h1.2M622.9 196.4h1.2M632.5 193.1h1.2M622.5 188.3h1.2M631.5 194.9h1.2M625.0 184.6h1.2M627.2 196.8h1.2M625.3 192.2h1.2M627.0 192.2h1.2M625.6 190.8h1.2M623.4 197.4h1.2M626.3 197.4h1.2M633.9 186.6h1.2M625.1 196.8h1.2M626.5 191.0h1.2M628.0 191.8h1.2M624.5 191.5h1.2M626.5 193.4h1.2M628.8 194.2h1.2M621.7 204.0h1.2M626.1 192.2h1.2M626.8 190.7h1.2M621.9 192.8h1.2M632.3 187.9h1.2M623.9 194.3h1.2M624.0 194.7h1.2M627.5 189.3h1.2M626.4 191.3h1.2M630.7 184.6h1.2M626.0 198.5h1.2M626.5 194.3h1.2M624.6 194.1h1.2M627.4 188.6h1.2M625.8 183.9h1.2M627.4 194.3h1.2M629.0 195.2h1.2" stroke="#1ccccc" stroke-width="1.2" stroke-opacity="0.62" fill="none"/>
<path d="M642.1 193.1h1.2M622.6 188.7h1.2M629.6 199.9h1.2M632.6 197.4h1.2M632.4 200.6h1.2M633.2 201.6h1.2M630.0 196.5h1.2M627.0 186.7h1.2M629.7 200.6h1.2M632.7 187.5h1.2M642.1 197.2h1.2M624.9 186.7h1.2M633.3 179.7h1.2M624.7 207.9h1.2M630.8 191.2h1.2M640.2 203.6h1.2M627.7 206.9h1.2M625.4 194.3h1.2M635.6 202.0h1.2M628.4 189.0h1.2M645.0 204.7h1.2M627.6 204.6h1.2M621.3 192.1h1.2M616.7 201.1h1.2M626.1 196.0h1.2M626.5 196.4h1.2M635.0 200.1h1.2M630.0 199.3h1.2M633.1 194.9h1.2M634.3 206.4h1.2M627.5 187.9h1.2M626.9 197.9h1.2M618.5 203.4h1.2M632.7 200.0h1.2M641.2 197.5h1.2M634.1 202.8h1.2M645.0 197.1h1.2M640.1 207.6h1.2M631.1 206.4h1.2M632.0 196.9h1.2M639.7 199.8h1.2M635.5 211.3h1.2M633.8 200.8h1.2M631.8 191.0h1.2M645.9 197.8h1.2M632.6 201.1h1.2M629.4 191.6h1.2M621.3 209.5h1.2M630.8 208.9h1.2M643.0 212.5h1.2M643.1 201.0h1.2M623.6 205.4h1.2M646.0 198.0h1.2M639.5 205.0h1.2M635.0 207.8h1.2M647.6 202.0h1.2M628.8 206.8h1.2M629.5 201.5h1.2M638.2 188.4h1.2M626.4 202.5h1.2M634.6 187.7h1.2M629.4 197.9h1.2M635.2 202.9h1.2M640.0 194.6h1.2M631.7 192.3h1.2M628.7 200.3h1.2M642.6 202.5h1.2M636.3 209.8h1.2M628.3 190.1h1.2M638.7 191.3h1.2M651.6 194.4h1.2M622.4 199.6h1.2M625.8 200.9h1.2M623.1 202.1h1.2M626.8 201.6h1.2M644.7 193.6h1.2M633.1 185.3h1.2M622.7 200.9h1.2M630.0 204.3h1.2M639.0 210.7h1.2M639.3 199.2h1.2M629.5 199.8h1.2M635.2 209.0h1.2M636.0 198.6h1.2M627.0 209.2h1.2M628.2 212.6h1.2M625.5 202.1h1.2M632.0 204.8h1.2M627.0 198.7h1.2M633.6 197.4h1.2M630.0 186.4h1.2M629.1 201.5h1.2M634.0 201.7h1.2M639.7 192.2h1.2M639.9 203.6h1.2M630.0 193.3h1.2M639.0 204.1h1.2M615.2 206.3h1.2M617.7 204.5h1.2M642.0 196.3h1.2M637.1 211.5h1.2M637.8 207.1h1.2M634.5 201.9h1.2M628.7 199.1h1.2M641.9 203.3h1.2M651.2 196.9h1.2M638.3 190.4h1.2M620.8 194.7h1.2M632.8 194.8h1.2M627.0 194.2h1.2M623.2 192.4h1.2M633.8 189.9h1.2M642.1 189.5h1.2M635.1 202.6h1.2M636.1 202.1h1.2M639.2 200.6h1.2M624.8 197.8h1.2M629.2 194.4h1.2M637.0 194.2h1.2M644.7 193.5h1.2M641.3 203.6h1.2M640.5 212.3h1.2M636.6 203.6h1.2M638.5 191.4h1.2M632.6 191.7h1.2M628.9 196.1h1.2M627.5 197.4h1.2M633.0 195.6h1.2M634.1 203.6h1.2M625.4 192.7h1.2M652.2 209.9h1.2M639.1 195.6h1.2M634.4 212.3h1.2M637.4 200.7h1.2M639.7 187.9h1.2M638.0 199.7h1.2M634.5 203.1h1.2M627.5 213.0h1.2M641.3 198.7h1.2M635.0 205.4h1.2M628.7 208.2h1.2M636.6 187.4h1.2M624.9 197.9h1.2M626.2 196.8h1.2M622.0 196.3h1.2M634.5 192.9h1.2M630.4 195.8h1.2M638.3 204.1h1.2M631.3 199.6h1.2M637.4 205.4h1.2M647.0 201.3h1.2M638.1 203.1h1.2M627.0 200.8h1.2M635.3 208.4h1.2M639.2 195.8h1.2M633.0 202.3h1.2M643.6 206.1h1.2M628.9 209.5h1.2M635.1 196.9h1.2M632.4 205.1h1.2M639.7 189.7h1.2M627.2 204.1h1.2M625.4 202.0h1.2M636.9 195.2h1.2M645.5 189.2h1.2M624.6 182.5h1.2M637.5 199.6h1.2M637.5 201.2h1.2M635.7 196.7h1.2M627.3 204.0h1.2M642.6 194.0h1.2M630.2 213.8h1.2M641.2 196.4h1.2M637.3 203.4h1.2M627.8 204.2h1.2M642.9 200.6h1.2M635.2 197.4h1.2M627.9 209.1h1.2M628.4 201.3h1.2M634.5 200.8h1.2M623.7 199.2h1.2M623.6 199.9h1.2M632.1 199.9h1.2M633.0 192.6h1.2M626.4 195.8h1.2M631.6 200.8h1.2M628.7 203.1h1.2M633.7 200.7h1.2M631.6 198.4h1.2M639.7 197.5h1.2M624.0 197.5h1.2M635.8 201.1h1.2M639.0 192.4h1.2M626.8 195.9h1.2M637.0 191.8h1.2M642.4 189.5h1.2M644.7 197.4h1.2M632.9 191.1h1.2M625.5 192.7h1.2M622.0 190.6h1.2M635.2 198.2h1.2M637.8 190.6h1.2M625.5 184.8h1.2M638.9 205.0h1.2M615.9 203.3h1.2M633.6 208.2h1.2M635.4 210.8h1.2M621.9 193.8h1.2M621.7 208.3h1.2M637.6 201.8h1.2M638.4 185.7h1.2M636.6 194.6h1.2M639.5 208.6h1.2M633.9 196.7h1.2M642.0 200.0h1.2M639.6 204.5h1.2M630.0 200.6h1.2M649.7 195.8h1.2M635.5 206.5h1.2M626.6 207.3h1.2M635.6 205.0h1.2M624.7 199.3h1.2M623.1 197.8h1.2M650.0 201.5h1.2M646.8 198.3h1.2M631.2 203.9h1.2M622.6 196.2h1.2M630.1 192.9h1.2M638.8 201.8h1.2M635.7 200.9h1.2M630.4 210.1h1.2M634.9 198.1h1.2M630.9 203.8h1.2M643.2 188.0h1.2M631.2 201.7h1.2M652.0 205.0h1.2M635.2 191.4h1.2M638.5 188.4h1.2M627.9 195.9h1.2M624.2 192.3h1.2M624.5 204.5h1.2M636.5 217.8h1.2M631.8 203.9h1.2M650.6 203.8h1.2M647.2 199.8h1.2M645.2 193.6h1.2M631.2 196.7h1.2M637.9 186.6h1.2M634.9 198.0h1.2M640.8 208.1h1.2M618.6 192.4h1.2M640.4 202.5h1.2M633.0 188.5h1.2M633.8 192.3h1.2M632.4 196.4h1.2M644.7 197.9h1.2M638.9 193.8h1.2M631.5 206.6h1.2M633.3 190.1h1.2M633.3 199.6h1.2M627.5 199.6h1.2M631.3 203.7h1.2M621.6 199.0h1.2M644.1 198.8h1.2M645.2 207.8h1.2M628.2 188.2h1.2M630.4 192.7h1.2M630.6 200.3h1.2M632.8 196.6h1.2M633.6 183.4h1.2M632.6 189.3h1.2M646.9 187.7h1.2M650.1 186.0h1.2M631.8 198.7h1.2M629.1 189.4h1.2M642.4 195.8h1.2M632.3 199.2h1.2M641.6 193.9h1.2M642.2 203.0h1.2M644.4 194.3h1.2M640.5 202.6h1.2M640.3 198.2h1.2M638.6 202.6h1.2M612.4 207.7h1.2M627.2 199.7h1.2M633.3 195.8h1.2M627.6 203.6h1.2M636.1 208.3h1.2M619.7 198.4h1.2M615.5 208.0h1.2M631.8 207.6h1.2M632.6 200.1h1.2M621.8 208.9h1.2M627.3 204.8h1.2M628.3 195.5h1.2M630.9 197.2h1.2M627.6 201.4h1.2M642.8 191.8h1.2M634.6 189.7h1.2M644.3 195.4h1.2" stroke="#1cb4b4" stroke-width="1.2" stroke-opacity="0.4" fill="none"/>
<path d="M649.5 183.6h1.2M644.8 164.8h1.2M660.5 181.0h1.2M651.4 191.7h1.2M636.3 173.4h1.2M660.7 199.7h1.2M637.9 181.5h1.2M653.8 180.9h1.2M657.1 187.7h1.2M644.6 188.3h1.2M641.0 193.6h1.2M639.3 194.0h1.2M660.6 169.0h1.2M644.7 198.8h1.2M655.0 188.4h1.2M648.7 183.9h1.2M649.4 180.5h1.2M642.7 171.2h1.2M661.0 182.1h1.2M662.4 189.0h1.2M649.4 172.4h1.2M643.0 182.7h1.2M644.2 179.6h1.2M624.8 178.7h1.2M643.0 178.0h1.2M642.5 168.2h1.2M637.6 195.6h1.2M636.8 177.6h1.2M637.9 180.8h1.2M640.6 200.4h1.2M636.0 194.5h1.2M641.1 186.3h1.2M645.3 156.5h1.2M642.3 180.3h1.2M646.5 184.4h1.2M635.4 173.9h1.2M652.2 179.9h1.2M645.7 188.3h1.2M646.3 183.7h1.2M635.6 182.4h1.2M630.1 198.3h1.2M638.4 197.5h1.2M640.9 181.2h1.2M657.1 184.3h1.2M647.0 179.9h1.2M643.1 175.7h1.2M638.4 166.3h1.2M644.0 175.3h1.2M658.1 201.5h1.2M662.6 171.7h1.2M642.2 181.3h1.2M631.6 196.5h1.2M651.9 185.1h1.2M662.9 186.9h1.2M642.7 185.0h1.2M641.2 186.8h1.2M633.6 187.1h1.2M642.8 178.6h1.2M642.0 181.3h1.2M629.7 187.9h1.2M643.7 198.7h1.2M645.3 191.0h1.2M645.2 181.3h1.2M634.5 178.3h1.2M640.2 160.7h1.2M642.8 176.0h1.2M648.2 191.8h1.2M642.8 193.2h1.2M656.7 189.4h1.2M642.5 183.4h1.2" stroke="#189090" stroke-width="1.2" stroke-opacity="0.3" fill="none"/>
<path d="M610.8 201.2h1.2M610.9 191.0h1.2M591.7 197.0h1.2M606.5 199.5h1.2M607.1 194.5h1.2M606.3 195.1h1.2M610.7 199.0h1.2M600.0 191.2h1.2M608.3 198.5h1.2M605.2 196.0h1.2M598.6 190.6h1.2M608.0 190.0h1.2M606.0 197.0h1.2M606.6 197.9h1.2M613.1 197.9h1.2M601.4 188.7h1.2M593.0 192.1h1.2M609.6 190.9h1.2M605.4 192.8h1.2M602.7 195.0h1.2M605.1 191.2h1.2M607.8 195.2h1.2M594.4 194.6h1.2M612.0 195.5h1.2M613.1 192.0h1.2M601.9 198.2h1.2M610.1 197.8h1.2M609.6 194.8h1.2M606.9 198.4h1.2M608.4 197.0h1.2M607.8 197.0h1.2M608.2 190.9h1.2M607.7 192.7h1.2M602.2 194.4h1.2M606.3 191.1h1.2M601.3 194.7h1.2M602.0 194.2h1.2M605.0 195.6h1.2M601.3 194.5h1.2M607.8 191.7h1.2M608.6 192.7h1.2M605.4 196.9h1.2M608.1 192.0h1.2M600.5 190.1h1.2M606.7 195.8h1.2M594.7 194.6h1.2M610.2 194.6h1.2M603.5 195.3h1.2M599.4 192.1h1.2M607.0 194.3h1.2M603.9 195.0h1.2M612.2 197.6h1.2M606.0 193.7h1.2M610.0 196.4h1.2M602.9 198.5h1.2M611.3 193.6h1.2M601.6 198.0h1.2M600.6 198.6h1.2M601.8 200.1h1.2M600.8 187.7h1.2M595.5 198.6h1.2M600.8 192.5h1.2M601.8 191.8h1.2M604.7 195.2h1.2M601.4 192.3h1.2M609.8 199.1h1.2M607.9 199.5h1.2M602.4 197.0h1.2M612.7 194.3h1.2M612.5 189.1h1.2M595.8 188.0h1.2M599.9 190.6h1.2M601.0 196.4h1.2M600.7 192.6h1.2M598.9 188.3h1.2M603.7 192.2h1.2M608.2 196.0h1.2M594.6 194.5h1.2M598.5 191.9h1.2M599.5 190.9h1.2M602.0 190.4h1.2M600.6 192.8h1.2M607.0 197.5h1.2M613.9 192.1h1.2M601.2 197.6h1.2M598.6 192.7h1.2M606.3 200.0h1.2M606.5 196.2h1.2M602.7 196.2h1.2M604.2 195.7h1.2M600.9 193.4h1.2M600.5 190.3h1.2M600.5 191.0h1.2M601.1 192.0h1.2M596.3 193.6h1.2M604.3 199.4h1.2M593.5 187.5h1.2M599.9 190.8h1.2M604.9 192.1h1.2M599.6 195.7h1.2" stroke="#b018b0" stroke-width="1.2" stroke-opacity="0.42" fill="none"/>
<path d="M610.8 172.1h1.2M619.9 191.4h1.2M621.3 179.3h1.2M623.1 179.8h1.2M609.4 181.4h1.2M622.6 180.7h1.2M609.8 173.2h1.2M613.8 174.8h1.2M611.5 173.2h1.2M605.3 175.3h1.2M606.9 174.4h1.2M622.1 184.0h1.2M609.6 174.9h1.2M621.0 178.9h1.2M616.8 185.2h1.2M609.0 182.3h1.2M615.8 178.0h1.2M610.9 177.0h1.2M585.1 178.2h1.2M625.4 185.2h1.2M634.0 180.5h1.2M619.3 177.0h1.2M606.2 175.8h1.2M615.9 184.0h1.2M596.9 183.7h1.2M619.5 184.1h1.2M602.0 181.1h1.2M614.8 173.5h1.2M603.1 191.1h1.2M606.8 177.7h1.2" stroke="#701870" stroke-width="1.2" stroke-opacity="0.3" fill="none"/>
<path d="M570.9 230.3h1.2M559.9 229.9h1.2M566.0 230.5h1.2M559.2 230.2h1.2M560.8 229.3h1.2M559.9 228.9h1.2M566.6 227.9h1.2M559.7 229.5h1.2M559.3 230.2h1.2M571.8 229.2h1.2M565.6 229.8h1.2M565.7 229.0h1.2M567.1 229.9h1.2M567.0 229.9h1.2M565.7 229.8h1.2M561.7 231.0h1.2M571.1 229.5h1.2M568.1 228.6h1.2M570.3 228.9h1.2M564.3 230.9h1.2M561.6 229.9h1.2M569.1 229.2h1.2M565.4 229.0h1.2M562.1 229.5h1.2M564.2 230.5h1.2M568.5 229.8h1.2M569.5 229.8h1.2M560.9 229.8h1.2M570.2 230.6h1.2M565.1 230.0h1.2M569.4 230.5h1.2M565.3 230.6h1.2M564.6 228.6h1.2M571.0 229.7h1.2M561.2 227.8h1.2M564.8 229.0h1.2M564.4 229.3h1.2M568.1 230.7h1.2M569.2 229.4h1.2M564.7 228.5h1.2M561.9 230.1h1.2M562.3 228.9h1.2M559.4 229.6h1.2M569.7 229.9h1.2M561.2 229.8h1.2M563.6 229.0h1.2M560.9 230.3h1.2M559.7 229.1h1.2M561.9 228.7h1.2M565.3 228.4h1.2M568.6 230.6h1.2M563.9 230.7h1.2M569.4 229.4h1.2M563.8 229.2h1.2M562.3 229.4h1.2M564.5 230.4h1.2M574.8 230.2h1.2M568.7 229.6h1.2M572.1 229.9h1.2M563.2 229.5h1.2M564.2 229.4h1.2M564.4 229.0h1.2M559.1 229.0h1.2M564.7 230.2h1.2M559.4 229.1h1.2M559.8 228.7h1.2M560.9 228.9h1.2M567.4 228.7h1.2M574.7 227.6h1.2M568.0 228.1h1.2M561.7 228.5h1.2M564.0 230.3h1.2M562.0 229.1h1.2M559.2 228.9h1.2M559.9 229.1h1.2M564.3 230.7h1.2M560.6 227.6h1.2M562.2 230.7h1.2M565.0 227.8h1.2M561.9 226.9h1.2M561.5 229.0h1.2M566.5 228.8h1.2M563.5 229.9h1.2M566.6 229.6h1.2M575.0 228.1h1.2M565.0 228.9h1.2M574.2 230.1h1.2M567.8 230.2h1.2M570.9 229.2h1.2M568.2 227.9h1.2M566.6 231.0h1.2M568.0 230.4h1.2M566.4 230.5h1.2M570.2 230.3h1.2M562.9 228.4h1.2M566.2 229.3h1.2M563.3 229.5h1.2M569.3 229.4h1.2M560.4 229.5h1.2M560.1 231.0h1.2M566.3 230.5h1.2M564.9 230.0h1.2M562.7 229.2h1.2M563.7 229.2h1.2M560.3 230.5h1.2M561.6 230.7h1.2M566.7 230.7h1.2M571.4 230.9h1.2M569.7 228.6h1.2M570.0 227.8h1.2M568.7 229.3h1.2M562.4 229.6h1.2M561.1 230.5h1.2M563.6 229.7h1.2M564.1 229.4h1.2M567.9 228.5h1.2M560.2 230.1h1.2M561.8 230.5h1.2M565.9 229.6h1.2M563.0 229.4h1.2M567.0 230.0h1.2M562.9 230.5h1.2M563.4 230.3h1.2M570.0 230.0h1.2M564.1 229.2h1.2M570.7 230.8h1.2M566.4 230.1h1.2M559.8 229.9h1.2M565.3 228.5h1.2M559.2 229.6h1.2M573.1 230.2h1.2M568.2 230.5h1.2M561.2 229.6h1.2M574.5 231.0h1.2M586.1 227.8h1.2M559.4 229.1h1.2M568.0 230.0h1.2M559.9 229.9h1.2M565.2 228.5h1.2M562.7 230.9h1.2" stroke="#1826d8" stroke-width="1.2" stroke-opacity="0.55" fill="none"/>
<path d="M607.8 228.4h1.2M654.7 227.1h1.2M619.8 226.2h1.2M625.5 226.7h1.2M595.7 228.2h1.2M606.7 230.5h1.2M575.9 231.0h1.2M615.4 228.5h1.2M597.1 227.9h1.2M572.3 228.3h1.2M607.3 223.7h1.2M583.3 230.8h1.2M600.1 228.4h1.2M582.9 229.9h1.2M566.5 229.5h1.2M616.7 226.3h1.2M596.8 228.3h1.2M572.6 226.7h1.2M580.8 228.4h1.2M577.4 229.8h1.2M606.3 229.6h1.2M607.2 226.4h1.2M629.5 227.9h1.2M615.4 225.7h1.2M611.0 230.2h1.2M587.2 229.7h1.2M598.6 230.0h1.2M603.2 229.1h1.2M580.0 227.7h1.2M578.5 230.8h1.2M628.5 226.2h1.2M598.8 227.3h1.2M632.4 228.4h1.2M599.5 226.4h1.2M627.0 229.4h1.2M617.9 230.8h1.2M577.4 228.2h1.2M618.7 228.6h1.2M598.8 228.0h1.2M622.1 228.1h1.2M618.5 225.8h1.2M601.2 229.5h1.2M621.8 224.7h1.2M595.4 227.9h1.2M600.0 228.5h1.2M609.1 229.7h1.2M605.7 228.4h1.2M619.1 230.3h1.2M601.3 227.3h1.2M638.3 228.5h1.2M647.2 225.7h1.2M591.5 228.9h1.2M597.9 226.3h1.2M618.0 225.2h1.2M576.8 230.4h1.2M574.7 227.7h1.2M614.6 226.9h1.2M629.3 227.8h1.2M559.2 227.7h1.2M567.0 229.4h1.2M600.7 227.7h1.2M588.1 227.7h1.2M603.8 230.0h1.2M581.7 229.2h1.2M636.4 228.1h1.2M600.8 225.3h1.2M601.8 228.1h1.2M601.1 229.0h1.2M593.3 229.3h1.2M629.5 227.8h1.2M578.2 228.5h1.2M625.5 228.5h1.2M581.5 229.5h1.2M602.2 229.7h1.2M579.1 230.0h1.2M571.7 228.8h1.2M608.5 230.7h1.2M596.4 225.8h1.2M638.8 226.6h1.2M589.1 230.4h1.2M591.9 228.5h1.2M604.4 229.3h1.2M587.2 228.0h1.2M635.0 225.5h1.2M580.3 229.5h1.2M596.9 229.5h1.2M634.3 229.4h1.2M599.2 229.1h1.2M621.3 227.5h1.2M603.6 226.7h1.2M608.8 228.2h1.2M568.7 230.8h1.2M648.5 227.0h1.2M607.8 228.8h1.2M633.2 228.8h1.2M645.6 225.1h1.2M590.6 229.1h1.2M604.3 226.5h1.2M606.2 226.0h1.2M587.7 229.0h1.2M605.7 229.1h1.2M583.5 230.2h1.2M606.7 228.3h1.2M600.6 227.9h1.2M639.8 229.3h1.2M605.7 230.9h1.2M580.8 228.8h1.2M592.9 230.0h1.2M592.8 227.5h1.2M567.2 228.5h1.2M620.5 228.6h1.2M589.4 228.5h1.2M596.4 229.1h1.2M591.7 229.2h1.2M617.0 229.6h1.2M585.2 229.2h1.2M583.5 228.8h1.2M597.9 228.3h1.2M612.9 226.5h1.2M608.6 229.7h1.2M593.2 228.6h1.2M613.2 227.5h1.2M592.8 229.5h1.2M605.4 229.6h1.2M569.9 229.6h1.2M609.7 229.3h1.2M587.1 228.6h1.2M633.4 227.6h1.2M626.8 225.1h1.2M609.3 227.4h1.2M576.9 228.3h1.2M584.8 229.1h1.2M600.7 229.5h1.2M627.2 228.3h1.2M638.6 228.8h1.2M611.9 227.9h1.2M630.0 226.8h1.2M621.6 227.8h1.2M587.9 230.6h1.2M615.0 228.6h1.2" stroke="#181fa8" stroke-width="1.2" stroke-opacity="0.4" fill="none"/>
<path d="M635.7 217.6h1.2M623.0 224.5h1.2M640.2 213.1h1.2M615.4 228.5h1.2M622.0 227.5h1.2M628.4 219.6h1.2M626.8 220.4h1.2M632.1 221.1h1.2M637.3 218.5h1.2M628.9 223.4h1.2M630.4 217.9h1.2M636.8 215.1h1.2M622.7 221.5h1.2M620.6 221.6h1.2M618.8 225.0h1.2M619.4 225.5h1.2M633.3 218.1h1.2M631.9 221.6h1.2M625.0 226.1h1.2M627.7 221.7h1.2M631.6 222.2h1.2M620.3 227.6h1.2M624.7 223.6h1.2M619.0 221.7h1.2M636.8 218.3h1.2M620.0 224.3h1.2M619.6 226.1h1.2M642.1 213.6h1.2M616.8 229.1h1.2M620.4 222.7h1.2M630.7 220.1h1.2M629.8 222.0h1.2M633.0 214.9h1.2M630.1 222.6h1.2M635.8 215.4h1.2M614.4 226.9h1.2M630.6 219.8h1.2M633.5 218.2h1.2M618.3 224.8h1.2M627.0 223.7h1.2M637.5 214.5h1.2M631.0 219.8h1.2M619.0 224.3h1.2M638.5 215.0h1.2M627.8 222.6h1.2M631.1 221.2h1.2M622.1 224.1h1.2M630.1 221.1h1.2M621.5 221.9h1.2M634.7 219.6h1.2M634.5 217.8h1.2M615.2 227.8h1.2M642.4 214.3h1.2M628.4 218.2h1.2M624.3 225.5h1.2M630.2 220.1h1.2M637.3 217.9h1.2M631.7 219.3h1.2M631.8 221.5h1.2M629.2 218.5h1.2M626.5 221.9h1.2M631.9 221.9h1.2M627.2 221.2h1.2M633.5 219.5h1.2M622.9 225.3h1.2M629.6 221.4h1.2M615.8 224.5h1.2M616.2 224.8h1.2M635.6 219.4h1.2M620.2 228.7h1.2M619.5 224.7h1.2M642.0 211.5h1.2M633.6 220.1h1.2M636.3 218.4h1.2M631.0 222.9h1.2M627.5 222.0h1.2M630.5 219.6h1.2M628.0 223.9h1.2M639.8 216.3h1.2M626.9 221.3h1.2M625.0 222.5h1.2M624.9 223.1h1.2M627.3 224.0h1.2M617.8 226.4h1.2M633.4 217.9h1.2M625.6 224.0h1.2M626.7 220.5h1.2M629.6 222.0h1.2M617.0 229.4h1.2M616.7 229.1h1.2M619.1 226.9h1.2M628.6 223.3h1.2M627.2 221.2h1.2M623.0 224.7h1.2M627.1 223.8h1.2M632.0 221.8h1.2M633.2 219.1h1.2M628.1 222.7h1.2M632.3 216.7h1.2M630.6 219.5h1.2M631.0 221.5h1.2M614.6 228.7h1.2M633.7 215.2h1.2M629.7 220.7h1.2M624.9 225.1h1.2M634.5 218.1h1.2M639.1 218.4h1.2M630.2 222.0h1.2M635.6 220.8h1.2M634.3 219.5h1.2" stroke="#181fb8" stroke-width="1.2" stroke-opacity="0.42" fill="none"/>
</g>
<path d="M468.6 206.3h1M471.5 203.7h1M469.6 199.7h1M473.3 202.8h1M468.7 201.1h1M470.6 205.3h1M465.8 203.4h1M471.9 203.9h1M466.9 214.8h1M468.8 202.6h1M468.1 213.2h1M471.0 197.4h1M469.0 202.6h1M470.5 202.4h1M470.2 198.6h1M467.0 203.4h1M472.3 200.3h1M465.6 207.6h1M469.0 206.8h1M468.6 204.5h1M468.9 203.5h1M472.1 202.6h1M468.4 203.5h1M467.4 210.1h1M468.5 205.0h1M466.7 205.3h1M469.5 206.3h1M467.0 200.7h1M463.6 209.2h1M467.6 209.9h1M471.2 208.2h1M468.2 202.5h1M471.8 196.2h1M470.0 209.8h1M470.6 202.7h1M470.9 197.5h1M467.9 201.5h1M466.5 209.8h1M471.6 194.3h1M470.4 205.9h1M469.2 200.7h1M472.1 205.2h1M470.7 197.4h1M467.4 206.9h1M469.6 201.8h1" stroke="#d428d4" stroke-width="1" stroke-opacity="0.4" fill="none"/>
<path d="M483.1 178.1h1M474.1 200.4h1M479.9 177.8h1M481.2 205.6h1M479.1 207.3h1M486.2 161.4h1M487.7 184.2h1M486.4 192.9h1M482.1 190.2h1M478.0 201.6h1M484.4 210.0h1M479.4 200.7h1M483.7 202.0h1M475.1 217.2h1M480.8 186.1h1M481.7 198.0h1M482.0 180.9h1M478.2 195.0h1M474.8 207.0h1M483.1 197.9h1M483.5 186.0h1M478.8 204.9h1M478.0 212.5h1M483.5 203.2h1M482.3 185.2h1M482.6 184.8h1M481.1 191.3h1M478.5 207.6h1M480.3 186.8h1M484.6 198.6h1M483.9 188.7h1M480.7 209.8h1M481.1 200.0h1M484.2 202.3h1M486.8 182.8h1M478.4 182.5h1M483.8 188.1h1M473.5 214.3h1M486.0 190.0h1M480.8 187.5h1M483.0 200.5h1M480.1 210.4h1M481.1 182.0h1M481.7 194.8h1M481.3 199.9h1M475.1 212.1h1M476.2 198.3h1M481.4 204.5h1M483.4 186.4h1M483.1 180.3h1" stroke="#2ab02a" stroke-width="1" stroke-opacity="0.3" fill="none"/>
<path d="M494.6 213.1h1M485.5 220.7h1M492.3 215.3h1M503.7 210.7h1M492.6 212.0h1M490.8 213.3h1M495.2 214.9h1M497.7 215.6h1M498.2 212.9h1M476.9 218.7h1M496.5 210.0h1M494.9 212.0h1M494.3 213.5h1M493.9 213.6h1M498.0 213.1h1M492.1 216.1h1M496.2 213.8h1M507.3 212.9h1M508.9 208.7h1M498.5 213.3h1M496.2 212.7h1M501.4 213.7h1M508.8 208.1h1M498.1 211.0h1M492.7 209.4h1M507.7 206.3h1M495.3 209.8h1M493.0 212.0h1M482.3 215.3h1M494.2 213.4h1M484.2 218.0h1M493.1 211.7h1M504.5 209.1h1M497.9 215.5h1M495.9 212.9h1M501.3 210.6h1M496.0 212.8h1M493.7 215.3h1M498.1 215.2h1M497.2 209.9h1M497.9 211.9h1M494.6 215.4h1M497.3 209.5h1M507.8 209.2h1M485.5 215.7h1M498.0 210.2h1M489.4 211.6h1M497.0 211.7h1M505.1 210.8h1M496.8 211.6h1M500.8 208.9h1M497.6 213.5h1M490.2 212.5h1M503.7 214.3h1M499.0 215.8h1M498.3 212.0h1M492.5 211.7h1M500.9 210.4h1M491.9 215.1h1M498.2 210.9h1M496.8 212.5h1M496.3 212.7h1M491.7 209.6h1M492.6 216.5h1M493.7 214.1h1M498.7 210.2h1M495.9 212.6h1M498.1 213.6h1M495.9 212.7h1M501.5 211.6h1" stroke="#22cccc" stroke-width="1" stroke-opacity="0.4" fill="none"/>
<path d="M459.2 228.7h1M466.3 225.4h1M464.3 225.1h1M465.0 224.3h1M468.5 226.7h1M461.0 227.5h1M459.1 226.2h1M461.0 227.7h1M467.1 224.3h1M465.4 227.0h1M463.7 229.9h1M458.9 228.9h1M470.3 225.4h1M460.5 228.5h1M455.3 227.3h1M459.2 226.9h1M462.3 224.8h1M466.9 227.8h1M459.6 227.8h1M464.9 225.4h1M462.7 227.4h1M468.8 225.6h1M455.4 228.4h1M465.9 223.5h1M462.6 226.6h1M463.5 226.9h1M461.3 227.6h1M454.3 227.9h1M462.4 226.5h1M467.3 228.0h1" stroke="#2232e0" stroke-width="1" stroke-opacity="0.4" fill="none"/>
<path d="M623.4 192.2h1M623.2 192.8h1M626.1 188.2h1M629.4 196.1h1M624.8 198.9h1M620.9 193.6h1M631.8 193.7h1M624.7 189.5h1M628.8 199.0h1M626.2 197.6h1M624.8 191.4h1M630.1 190.6h1M627.1 193.7h1M623.5 193.6h1M623.3 189.8h1M621.9 186.6h1M623.2 194.2h1M628.0 188.5h1M622.8 202.3h1M626.1 195.2h1M620.5 189.5h1M631.6 188.8h1M624.5 189.7h1M625.2 195.8h1M620.2 194.6h1M619.4 187.3h1M629.1 189.2h1M624.4 190.5h1M632.5 190.9h1M626.9 202.3h1M626.2 189.8h1M627.6 189.4h1M626.5 188.7h1M623.8 185.5h1M630.0 191.5h1M621.4 196.6h1M626.2 191.8h1M624.0 192.6h1M625.9 191.3h1M624.8 196.3h1M624.1 198.5h1M630.6 190.1h1M624.9 187.2h1M623.1 195.5h1M625.9 191.0h1M629.3 184.6h1M627.5 192.9h1M628.7 192.7h1M628.0 198.6h1M624.7 195.3h1M624.4 189.6h1M623.2 191.4h1M623.9 187.7h1M627.4 187.2h1M629.2 190.1h1M625.9 191.8h1M628.7 196.7h1M626.3 190.6h1M629.1 193.5h1M622.9 192.8h1M628.3 193.7h1M624.6 199.3h1M623.7 195.8h1M629.0 201.6h1M622.1 194.3h1M623.7 203.1h1M628.9 198.6h1M629.2 196.6h1M620.3 201.3h1M620.1 194.8h1M628.4 194.8h1M629.4 194.2h1M628.5 195.1h1M622.8 196.6h1M623.8 195.3h1M622.8 193.3h1M626.5 198.5h1M623.6 190.1h1M627.6 189.1h1M625.2 203.5h1M627.6 196.5h1M623.0 194.8h1M625.5 201.8h1M623.7 198.0h1M625.6 191.9h1M624.6 194.0h1M622.2 190.4h1M633.1 187.4h1M628.1 197.3h1M626.0 189.8h1" stroke="#22d0d0" stroke-width="1" stroke-opacity="0.4" fill="none"/>
<path d="M643.1 200.6h1M636.8 198.2h1M622.1 201.0h1M641.9 194.8h1M646.2 194.4h1M621.6 199.2h1M630.8 196.8h1M649.0 197.5h1M639.7 198.2h1M635.3 197.4h1M628.0 195.8h1M627.2 195.0h1M628.1 192.9h1M639.8 189.7h1M630.8 202.9h1M631.3 205.1h1M624.7 198.5h1M646.0 181.4h1M630.6 204.3h1M633.2 198.5h1M633.5 196.9h1M628.9 189.9h1M610.7 203.8h1M632.9 199.9h1M636.4 204.3h1M639.0 187.8h1M619.2 205.0h1M634.4 204.5h1M628.1 191.2h1M638.5 194.4h1M645.0 198.0h1M635.0 189.2h1M631.7 208.4h1M635.4 199.2h1M628.4 202.4h1M627.5 210.1h1M633.3 194.9h1M637.0 183.8h1M635.0 200.2h1M626.8 184.6h1M627.4 192.2h1M623.9 199.6h1M644.6 198.8h1M637.8 191.5h1M647.1 196.4h1M628.2 195.4h1M618.4 213.1h1M633.3 196.1h1M627.1 194.1h1M631.0 193.3h1M643.0 198.4h1M639.0 195.9h1M643.6 197.3h1M627.9 193.1h1M644.1 200.6h1M628.2 194.1h1M627.9 197.4h1M627.9 197.9h1M638.3 205.2h1M643.3 206.2h1M642.2 213.9h1M629.1 202.5h1M629.4 194.3h1M636.0 192.9h1M636.3 199.1h1M645.0 211.2h1M634.5 193.1h1M632.5 191.9h1M628.5 195.7h1M625.5 191.3h1M639.3 196.5h1M627.8 190.9h1M642.6 196.7h1M650.7 193.5h1M626.0 199.4h1M644.0 202.3h1M623.2 190.3h1M629.9 190.5h1M633.4 193.1h1M633.0 199.2h1" stroke="#1cb4b4" stroke-width="1" stroke-opacity="0.3" fill="none"/>
<path d="M603.5 188.7h1M604.6 186.4h1M604.2 193.0h1M597.5 199.1h1M610.6 200.1h1M605.0 193.0h1M604.6 199.5h1M603.3 193.6h1M600.8 193.3h1M608.3 192.6h1M608.6 195.9h1M614.2 197.5h1M610.4 192.9h1M615.2 197.4h1M602.1 198.4h1M605.3 190.8h1M606.1 196.5h1M603.9 192.8h1M594.6 197.1h1M601.2 194.7h1M601.7 191.5h1M605.6 192.0h1M609.3 190.7h1M605.6 198.4h1M601.3 194.3h1M607.9 194.0h1M602.7 193.4h1M617.4 195.2h1M603.1 192.7h1M601.7 190.9h1" stroke="#b820b8" stroke-width="1" stroke-opacity="0.3" fill="none"/>
<path d="M584.8 229.8h1M624.7 230.4h1M571.0 228.4h1M598.4 227.1h1M582.2 229.2h1M586.8 227.9h1M603.8 227.1h1M593.3 229.6h1M614.8 228.4h1M623.0 227.9h1M661.5 227.1h1M634.3 229.0h1M589.7 230.4h1M584.1 228.5h1M611.6 228.3h1M584.8 227.0h1M616.8 227.9h1M602.3 227.0h1M582.3 229.5h1M599.8 230.7h1M620.2 226.7h1M610.4 226.2h1M587.6 228.0h1M609.6 228.3h1M620.5 225.4h1M593.7 227.1h1M599.9 228.3h1M578.7 226.7h1M591.2 227.2h1M603.1 226.6h1M619.5 229.3h1M600.2 227.7h1M643.7 226.9h1M587.7 230.8h1M590.8 227.0h1M597.0 230.0h1M634.9 227.0h1M588.7 226.8h1M611.1 227.7h1M626.1 230.2h1" stroke="#2028c0" stroke-width="1" stroke-opacity="0.3" fill="none"/>
<path d="M437.5 253V298.1H540.7" fill="none" stroke="#9c1c9c" stroke-width="0.9"/>
<path d="M449.4 253V298" stroke="#1fa81f" stroke-width="0.7" stroke-dasharray="1 1.2" fill="none"/>
<path d="M540.4 253V298" stroke="#1fa81f" stroke-width="0.7" stroke-dasharray="1 1.2" fill="none"/>
<path d="M457.5 253.4V298" stroke="#cfcfcf" stroke-width="0.8" stroke-dasharray="0.8 4.2" fill="none"/>
<path d="M478.3 253.4V298" stroke="#cfcfcf" stroke-width="0.8" stroke-dasharray="0.8 4.2" fill="none"/>
<path d="M498.7 253.4V298" stroke="#cfcfcf" stroke-width="0.8" stroke-dasharray="0.8 4.2" fill="none"/>
<path d="M519.6 253.4V298" stroke="#cfcfcf" stroke-width="0.8" stroke-dasharray="0.8 4.2" fill="none"/>
<path d="M438.3 294.9L441.2 289.2L444.5 284.3L447.4 280.7L449.4 281.5L451.8 280.6L454.2 279.1L456.7 278.1L458.6 277.2L460.4 277.0L462.7 274.1L465.6 270.8L468.9 264.3L472.1 257.0L474.6 254.1L476.2 253.4L477.8 254.7L480.2 260.7L482.7 270.5L485.1 280.2L487.6 287.6L490.0 292.4L492.4 295.2L494.9 296.3L498.1 297.1L506.2 297.6L519.2 298.1L540.4 298.3" fill="none" stroke="#1cc4c4" stroke-width="1.1" stroke-linejoin="round"/>
<text x="540.6" y="303.1" font-size="4.4" fill="#d8d8d8" text-anchor="end">250fL</text>
<path d="M437.5 316.6V361.3H519.6" fill="none" stroke="#9c1c9c" stroke-width="0.9"/>
<path d="M441.3 316.6V361" stroke="#1fa81f" stroke-width="0.7" stroke-dasharray="1 1.2" fill="none"/>
<path d="M490.5 316.6V361" stroke="#1fa81f" stroke-width="0.7" stroke-dasharray="1 1.2" fill="none"/>
<path d="M458.3 317V361" stroke="#cfcfcf" stroke-width="0.8" stroke-dasharray="0.8 4.2" fill="none"/>
<path d="M478.3 317V361" stroke="#cfcfcf" stroke-width="0.8" stroke-dasharray="0.8 4.2" fill="none"/>
<path d="M499 317V361" stroke="#cfcfcf" stroke-width="0.8" stroke-dasharray="0.8 4.2" fill="none"/>
<path d="M439.6 361.3L444.5 360.8L446.9 358.1L451.8 350.7L456.7 343.4L460.7 343.4L464.0 338.6L468.1 332.9L471.3 331.2L473.7 327.2L476.2 322.3L478.6 320.7L481.9 319.9L484.3 319.1L486.4 317.1L488.4 318.2L490.5 319.9L493.2 318.7L495.7 319.1L498.1 317.4L500.1 316.9L502.2 319.1L504.3 321.8L507.1 322.3L509.5 325.6L511.1 327.2L513.1 327.7L515.2 332.1L517.6 335.3L519.6 336.9" fill="none" stroke="#1cc4c4" stroke-width="1.1" stroke-linejoin="round"/>
<text x="519.6" y="366.5" font-size="4.4" fill="#d8d8d8" text-anchor="end">40fL</text>
</svg>
<div class="a" style="left:-12px;top:377px;width:824px;height:85px;background:linear-gradient(#f4f4f4,#f4f4f4 1.2px,#c2c2c2 1.8px,#cfcfcf 22px,#dfdfdf 47px,#ececec 73px,#ececec)"></div>
<div class="a" style="left:208px;top:381px;width:3.8px;height:67px;background:linear-gradient(#e6e6e6,#f6f6f6)"></div>
<div class="a" style="left:2px;top:381px;width:206px;height:67.2px;border-radius:4px;background:radial-gradient(ellipse 75% 85% at 50% 48%,#191919,#0b0b0b 70%,#050505);overflow:hidden">
<div class="a" style="left:0;top:55.4px;width:206px;height:0.9px;background:#2c2c2c"></div>
<div class="a" style="left:0;top:56.3px;width:206px;height:11px;background:#121212"></div>
<div class="a" style="left:2.6px;top:2.2px;width:59.6px;height:18.6px;border-radius:3px;background:#1a5ca6"></div>
<div class="a" style="left:4.8px;top:1.8px;height:10px;line-height:10px;font-size:7.9px;color:#fff;letter-spacing:-0.1px">XN-2800-1-L</div>
<div class="a c" style="left:5px;top:13px;width:17.4px;height:5.6px;line-height:5.8px;font-size:6.3px;font-weight:bold;background:#fff;color:#123a6a">X<span style="font-size:4.4px">N</span></div>
<div class="a c" style="left:24.2px;top:13px;width:17.2px;height:5.6px;line-height:5.8px;font-size:6.2px;font-weight:bold;background:#fff;color:#123a6a">Y&#9656;</div>
<div class="a c" style="left:43px;top:13px;width:17px;height:5.6px;line-height:5.8px;font-size:5px;background:rgba(255,255,255,0.22);color:rgba(255,255,255,0.35)">&#9656;</div>
<div class="a" style="left:3px;top:24.6px;width:13px;height:30.4px;border-radius:5.5px;background:linear-gradient(90deg,#3fae0c,#62e01c 45%,#52cc12);box-shadow:0 0 2.5px 0.6px rgba(80,200,20,0.55)"></div>
<div class="a" style="left:3px;top:59.2px;width:12.6px;height:4.6px;border-radius:2.2px;background:#46bd10;box-shadow:0 0 2px rgba(80,200,20,0.5)"></div>
<div class="a c" style="left:22px;top:35.6px;width:17.2px;height:9px;line-height:10.2px;border-radius:1.4px;background:#f4f4f4;color:#161616;font-size:8px;font-weight:bold">WB</div>
<div class="a c" style="left:43px;top:35.6px;width:18.2px;height:8.8px;line-height:9px;border-radius:1.4px;box-shadow:inset 0 0 0 0.7px #333;color:#383838;font-size:6.6px;box-sizing:border-box">CBC</div>
<div class="a c" style="left:62.6px;top:35.6px;width:18px;height:8.8px;line-height:9px;border-radius:1.4px;box-shadow:inset 0 0 0 0.7px #333;color:#383838;font-size:6.6px;box-sizing:border-box">DIFF</div>
<div class="a c" style="left:82.4px;top:35.6px;width:18.2px;height:8.8px;line-height:9px;border-radius:1.4px;box-shadow:inset 0 0 0 0.7px #333;color:#383838;font-size:6.6px;box-sizing:border-box">RET</div>
<div class="a c" style="left:105px;top:35.6px;width:21.6px;height:8.8px;line-height:9px;border-radius:1.4px;box-shadow:inset 0 0 0 0.7px #333;color:#383838;font-size:6.6px;box-sizing:border-box">PLT-F</div>
<div class="a c" style="left:128.4px;top:35.6px;width:21px;height:8.8px;line-height:9px;border-radius:1.4px;box-shadow:inset 0 0 0 0.7px #333;color:#383838;font-size:6.6px;box-sizing:border-box">WPC</div>
<div class="a" style="left:135.4px;top:0;width:32.6px;height:20.8px;border-radius:0 0 4px 4px;background:linear-gradient(#4a4a4a,#3a3a3a 50%,#303030)"></div>
<div class="a" style="left:169.4px;top:0;width:32.6px;height:20.8px;border-radius:0 0 4px 4px;background:linear-gradient(#4a4a4a,#3a3a3a 50%,#303030)"></div>
<svg class="a" style="left:145.4px;top:5.4px" width="13" height="11" viewBox="0 0 13 11"><path d="M1.6 5.4l-0.6 4.4h11l-0.6-4.4z" fill="none" stroke="#fff" stroke-width="1.1" stroke-linejoin="round"/><path d="M3.1 1.6v6M5.4 1.6v6M7.7 1.6v6M10 1.6v6" stroke="#fff" stroke-width="1.3" stroke-linecap="round"/></svg>
<svg class="a" style="left:182.8px;top:5.2px" width="7" height="11" viewBox="0 0 7 11"><rect x="0.4" y="0.4" width="6.2" height="10" rx="0.8" fill="#fff"/><rect x="1.6" y="4.6" width="3.8" height="4.6" fill="#333"/><rect x="2.6" y="6.2" width="1.8" height="1" fill="#ddd"/></svg>
<div class="a" style="left:153.3px;top:24px;width:5.7px;height:20.2px;box-sizing:border-box;border:0.7px solid #1b6fe0;opacity:0.55;background:#0c0c0c"></div>
<div class="a" style="left:153.3px;top:39.8px;width:5.7px;height:4.4px;background:#1b6fe0"></div>
<div class="a" style="left:154.4px;top:26.8px;width:3.5px;height:13px;background:#d9dde6"></div>
<div class="a" style="left:159.3px;top:24px;width:5.5px;height:20.2px;box-sizing:border-box;border:0.7px solid #d84a98;opacity:0.55;background:#0c0c0c"></div>
<div class="a" style="left:159.3px;top:39.8px;width:5.5px;height:4.4px;background:#d84a98"></div>
<div class="a" style="left:160.4px;top:29.8px;width:3.3px;height:10px;background:#d9dde6"></div>
<div class="a" style="left:165.1px;top:24px;width:7.2px;height:20.2px;box-sizing:border-box;border:0.7px solid #10a850;opacity:0.55;background:#0c0c0c"></div>
<div class="a" style="left:165.1px;top:39.8px;width:7.2px;height:4.4px;background:#10a850"></div>
<div class="a" style="left:166.2px;top:36.2px;width:3.0px;height:3.6px;background:#d9dde6"></div>
<div class="a" style="left:169.2px;top:37.8px;width:2.0px;height:2px;background:#c9cdd6"></div>
<div class="a" style="left:173.1px;top:24px;width:7.2px;height:20.2px;box-sizing:border-box;border:0.7px solid #089ee6;opacity:0.55;background:#0c0c0c"></div>
<div class="a" style="left:173.1px;top:39.8px;width:7.2px;height:4.4px;background:#089ee6"></div>
<div class="a" style="left:174.2px;top:34.4px;width:3.0px;height:5.4px;background:#d9dde6"></div>
<div class="a" style="left:177.2px;top:36.6px;width:2.0px;height:3.2px;background:#c9cdd6"></div>
<div class="a" style="left:181.0px;top:24px;width:5.4px;height:20.2px;box-sizing:border-box;border:0.7px solid #a21ee0;opacity:0.55;background:#0c0c0c"></div>
<div class="a" style="left:181.0px;top:39.8px;width:5.4px;height:4.4px;background:#a21ee0"></div>
<div class="a" style="left:182.1px;top:30.2px;width:3.2px;height:9.6px;background:#d9dde6"></div>
<div class="a" style="left:186.8px;top:24px;width:3.4px;height:20.2px;box-sizing:border-box;border:0.7px solid #e01818;opacity:0.55;background:#0c0c0c"></div>
<div class="a" style="left:186.8px;top:39.8px;width:3.4px;height:4.4px;background:#e01818"></div>
<div class="a" style="left:187.9px;top:37.8px;width:1.2px;height:2px;background:#d9dde6"></div>
<div class="a" style="left:190.5px;top:24px;width:3.9px;height:20.2px;box-sizing:border-box;border:0.7px solid #e8960c;opacity:0.55;background:#0c0c0c"></div>
<div class="a" style="left:190.5px;top:39.8px;width:3.9px;height:4.4px;background:#e8960c"></div>
<div class="a" style="left:191.6px;top:26.2px;width:1.7px;height:13.6px;background:#d9dde6"></div>
<div class="a" style="left:194.8px;top:24px;width:7px;height:20.2px;box-sizing:border-box;border:0.7px solid #2e2e2e;opacity:0.55;background:#0c0c0c"></div>
<div class="a" style="left:194.8px;top:39.8px;width:7px;height:4.4px;background:#2e2e2e"></div>
<div class="a" style="left:195.9px;top:27.2px;width:2.9px;height:12.6px;background:#d9dde6"></div>
<div class="a" style="left:198.8px;top:34.4px;width:1.9px;height:5.4px;background:#c9cdd6"></div>
</div>
<div class="a" style="left:211.8px;top:381px;width:206px;height:67.2px;border-radius:4px;background:radial-gradient(ellipse 75% 85% at 50% 48%,#191919,#0b0b0b 70%,#050505);overflow:hidden">
<div class="a" style="left:0;top:55.4px;width:206px;height:0.9px;background:#2c2c2c"></div>
<div class="a" style="left:0;top:56.3px;width:206px;height:11px;background:#121212"></div>
<div class="a" style="left:2.6px;top:2.2px;width:59.6px;height:18.6px;border-radius:3px;background:#3c8a3c"></div>
<div class="a" style="left:4.8px;top:1.8px;height:10px;line-height:10px;font-size:7.9px;color:#fff;letter-spacing:-0.1px">XN-2800-1-R</div>
<div class="a c" style="left:5px;top:13px;width:17.4px;height:5.6px;line-height:5.8px;font-size:6.3px;font-weight:bold;background:#fff;color:#1c4420">X<span style="font-size:4.4px">N</span></div>
<div class="a c" style="left:24.2px;top:13px;width:17.2px;height:5.6px;line-height:5.8px;font-size:6.2px;font-weight:bold;background:#fff;color:#1c4420">Y&#9656;</div>
<div class="a c" style="left:43px;top:13px;width:17px;height:5.6px;line-height:5.8px;font-size:5px;background:rgba(255,255,255,0.22);color:rgba(255,255,255,0.35)">&#9656;</div>
<div class="a" style="left:3px;top:24.6px;width:13px;height:30.4px;border-radius:5.5px;background:linear-gradient(90deg,#3fae0c,#62e01c 45%,#52cc12);box-shadow:0 0 2.5px 0.6px rgba(80,200,20,0.55)"></div>
<div class="a c" style="left:22px;top:35.6px;width:17.2px;height:9px;line-height:10.2px;border-radius:1.4px;background:#f4f4f4;color:#161616;font-size:8px;font-weight:bold">WB</div>
<div class="a c" style="left:43px;top:35.6px;width:18.2px;height:8.8px;line-height:9px;border-radius:1.4px;box-shadow:inset 0 0 0 0.7px #333;color:#383838;font-size:6.6px;box-sizing:border-box">CBC</div>
<div class="a c" style="left:62.6px;top:35.6px;width:18px;height:8.8px;line-height:9px;border-radius:1.4px;box-shadow:inset 0 0 0 0.7px #333;color:#383838;font-size:6.6px;box-sizing:border-box">DIFF</div>
<div class="a" style="left:135.4px;top:0;width:32.6px;height:20.8px;border-radius:0 0 4px 4px;background:linear-gradient(#4a4a4a,#3a3a3a 50%,#303030)"></div>
<div class="a" style="left:169.4px;top:0;width:32.6px;height:20.8px;border-radius:0 0 4px 4px;background:linear-gradient(#4a4a4a,#3a3a3a 50%,#303030)"></div>
<svg class="a" style="left:145.4px;top:5.4px" width="13" height="11" viewBox="0 0 13 11"><path d="M1.6 5.4l-0.6 4.4h11l-0.6-4.4z" fill="none" stroke="#fff" stroke-width="1.1" stroke-linejoin="round"/><path d="M3.1 1.6v6M5.4 1.6v6M7.7 1.6v6M10 1.6v6" stroke="#fff" stroke-width="1.3" stroke-linecap="round"/></svg>
<svg class="a" style="left:182.8px;top:5.2px" width="7" height="11" viewBox="0 0 7 11"><rect x="0.4" y="0.4" width="6.2" height="10" rx="0.8" fill="#fff"/><rect x="1.6" y="4.6" width="3.8" height="4.6" fill="#333"/><rect x="2.6" y="6.2" width="1.8" height="1" fill="#ddd"/></svg>
<div class="a" style="left:153.6px;top:24px;width:5.7px;height:20.2px;box-sizing:border-box;border:0.7px solid #1b6fe0;opacity:0.55;background:#0c0c0c"></div>
<div class="a" style="left:153.6px;top:39.8px;width:5.7px;height:4.4px;background:#1b6fe0"></div>
<div class="a" style="left:154.7px;top:26.8px;width:3.5px;height:13px;background:#d9dde6"></div>
<div class="a" style="left:159.6px;top:24px;width:5.5px;height:20.2px;box-sizing:border-box;border:0.7px solid #d84a98;opacity:0.55;background:#0c0c0c"></div>
<div class="a" style="left:159.6px;top:39.8px;width:5.5px;height:4.4px;background:#d84a98"></div>
<div class="a" style="left:160.7px;top:29.8px;width:3.3px;height:10px;background:#d9dde6"></div>
<div class="a" style="left:165.4px;top:24px;width:7.2px;height:20.2px;box-sizing:border-box;border:0.7px solid #10a850;opacity:0.55;background:#0c0c0c"></div>
<div class="a" style="left:165.4px;top:39.8px;width:7.2px;height:4.4px;background:#10a850"></div>
<div class="a" style="left:166.5px;top:36.2px;width:3.0px;height:3.6px;background:#d9dde6"></div>
<div class="a" style="left:169.5px;top:37.8px;width:2.0px;height:2px;background:#c9cdd6"></div>
<div class="a" style="left:173.4px;top:24px;width:7.2px;height:20.2px;box-sizing:border-box;border:0.7px solid #089ee6;opacity:0.55;background:#0c0c0c"></div>
<div class="a" style="left:173.4px;top:39.8px;width:7.2px;height:4.4px;background:#089ee6"></div>
<div class="a" style="left:174.5px;top:34.4px;width:3.0px;height:5.4px;background:#d9dde6"></div>
<div class="a" style="left:177.5px;top:36.6px;width:2.0px;height:3.2px;background:#c9cdd6"></div>
</div>
<div class="a" style="left:206px;top:437.2px;width:8px;height:11px;background:#111"></div>
<div class="a" style="left:716.2px;top:381px;width:39.6px;height:67.2px;border-radius:4.5px;background:radial-gradient(ellipse 80% 70% at 50% 50%,#222,#0e0e0e)"></div>
<div class="a" style="left:719.6px;top:382px;width:32.8px;height:20.2px;border-radius:3px 3px 4px 4px;background:linear-gradient(#1c1c1c,#262626)"></div>
<svg class="a" style="left:731px;top:388px" width="10" height="10" viewBox="0 0 10 10"><rect x="0.8" y="3.6" width="8.4" height="3.8" rx="0.6" fill="#343434"/><rect x="2.6" y="1.2" width="4.8" height="2.6" fill="#2e2e2e"/><rect x="2.6" y="6.2" width="4.8" height="2.8" fill="#2e2e2e"/></svg>
<div class="a c" style="left:720px;top:405.8px;width:32px;height:8.4px;line-height:8.6px;border-radius:3.4px;background:#474747;color:#ededed;font-size:6.8px">Printer</div>
<div class="a" style="left:719.2px;top:440.6px;width:33.6px;height:4px;border-radius:1.5px;background:#3a3a3a"></div>
<div class="a" style="left:758.4px;top:381px;width:39.6px;height:67.2px;border-radius:4.5px;background:radial-gradient(ellipse 80% 70% at 50% 50%,#222,#0e0e0e)"></div>
<div class="a" style="left:762px;top:382px;width:32.4px;height:20.2px;border-radius:3px 3px 4px 4px;background:linear-gradient(#5a5a5a,#404040 50%,#383838)"></div>
<svg class="a" style="left:774px;top:388.4px" width="9" height="11" viewBox="0 0 9 11"><rect x="0.6" y="0.4" width="7.6" height="3" fill="#fff"/><rect x="0.6" y="3.9" width="7.6" height="3" fill="#fff"/><rect x="0.6" y="7.4" width="7.6" height="3" fill="#fff"/><path d="M6 1.9h1.4M6 5.4h1.4M6 8.9h1.4" stroke="#666" stroke-width="0.7"/></svg>
<div class="a c" style="left:762.4px;top:405.8px;width:32px;height:8.4px;line-height:8.6px;border-radius:3.4px;background:#474747;color:#ededed;font-size:6.8px">HOST</div>
<div class="a c" style="left:758.4px;top:422.6px;width:39.6px;height:11px;line-height:11px;color:#fff;font-size:8.2px;-webkit-text-stroke:0.2px #fff">HOST1</div>
<div class="a" style="left:761.2px;top:440.6px;width:33.8px;height:4px;border-radius:1.5px;background:#46bd10;box-shadow:0 0 2px rgba(80,200,20,0.5)"></div>
</div></div></body></html>
